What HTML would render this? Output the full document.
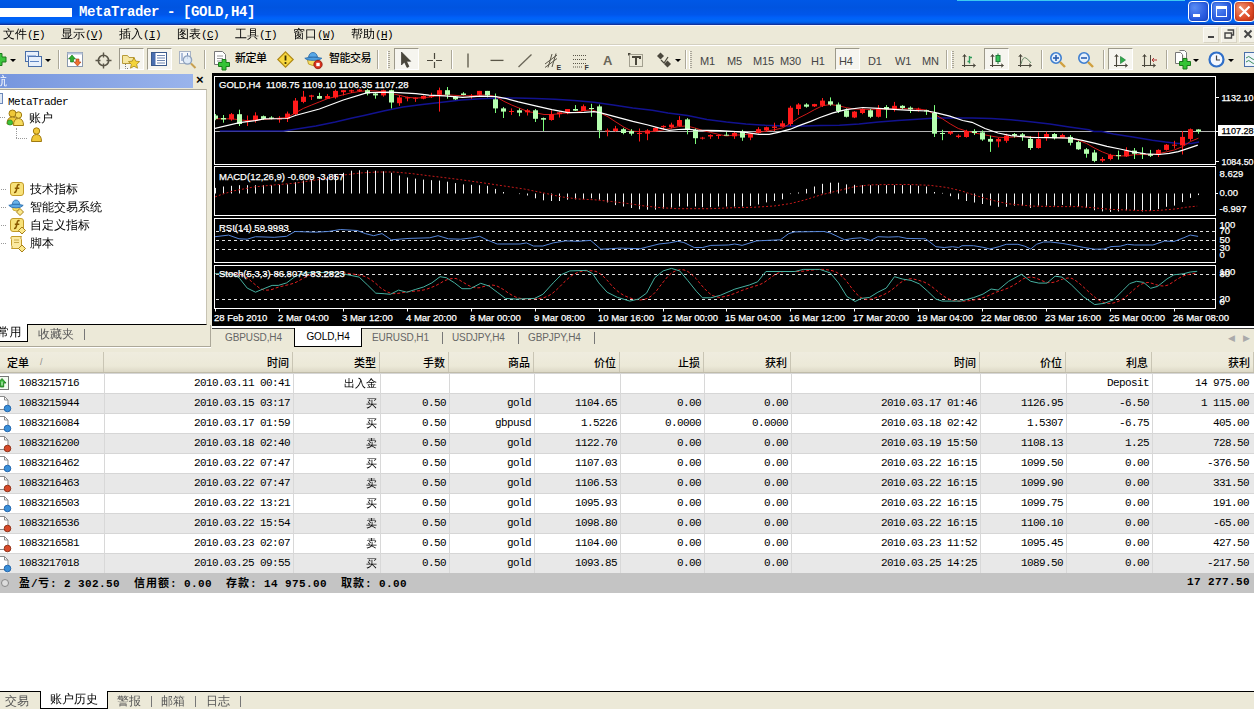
<!DOCTYPE html>
<html lang="zh"><head><meta charset="utf-8"><title>MetaTrader - [GOLD,H4]</title>
<style>
html,body{margin:0;padding:0;background:#fff;}
body{width:1254px;height:709px;overflow:hidden;}
#app{position:relative;width:1254px;height:709px;overflow:hidden;background:#ece9d8;font-family:"Liberation Sans","WenQuanYi Zen Hei",sans-serif;font-size:12px;color:#000;}
.ic{position:absolute;overflow:visible}
.titlebar{position:absolute;left:0;top:0;width:1254px;height:25px;background:linear-gradient(#0058e6 0%,#0054e0 30%,#0056ea 58%,#0060f8 70%,#0068f6 84%,#0058e0 92%,#1038a8 97%,#0c2c8c 100%);}
.titlebar .redact{position:absolute;left:0;top:8px;width:72px;height:9px;background:#fff}
.titlebar .ttext{position:absolute;left:79px;top:3px;font:bold 14px/18px "Liberation Mono",monospace;letter-spacing:-0.4px;color:#fff;white-space:pre}
.titlebar .cyan{position:absolute;left:957px;top:0;width:228px;height:1px;background:#3cc8f0}
.wb{position:absolute;top:1px;width:19px;height:19px;border:1px solid #fff;border-radius:4px;background:radial-gradient(circle at 30% 30%,#5a8cf4,#2a5ce0 60%,#1a48c8);box-shadow:inset 0 0 2px #1038a8}
.wb.close{background:radial-gradient(circle at 30% 30%,#f0906c,#dc4a26 60%,#c03010);box-shadow:inset 0 0 2px #902008}
.menubar{position:absolute;left:0;top:25px;width:1254px;height:20px;background:#ece9d8;border-top:1px solid #f8f8ff;border-bottom:1px solid #d4d0c0;box-sizing:border-box}
.menubar span{position:absolute;top:1px;font:12px/15px "WenQuanYi Zen Hei",sans-serif;white-space:pre}
.menubar span i{font:normal 11px/15px "Liberation Mono",monospace;letter-spacing:-0.6px}
.menubar{--x:0}
.toolbar{position:absolute;left:0;top:45px;width:1254px;height:28px;background:#ece9d8;border-top:1px solid #fff;box-sizing:border-box}
.toolbar .ic{margin-top:-1px}
.ddarr{position:absolute;width:0;height:0;border-left:3px solid transparent;border-right:3px solid transparent;border-top:3px solid #000;margin-top:-46px}
.tsep{position:absolute;top:4px;width:1px;height:19px;background:#aca899;box-shadow:1px 0 0 #fff}
.grip{position:absolute;top:5px;width:3px;height:18px;background:repeating-linear-gradient(#aaa69a 0 1px,transparent 1px 2px);box-shadow:1px 0 0 #fff inset}
.pressed{position:absolute;top:2px;height:22px;background:#f6f5ef;border:1px solid;border-color:#9c998a #fff #fff #9c998a;box-sizing:border-box}
.tlabel{position:absolute;top:6px;font:500 11px/13px "Liberation Sans","Noto Sans CJK SC",sans-serif;letter-spacing:-0.5px;white-space:pre}
.tA{position:absolute;top:8px;font:bold 13px/14px "Liberation Sans",sans-serif;color:#6a6658}
.tf{position:absolute;top:9px;font:11px/12px "Liberation Sans",sans-serif;color:#444;letter-spacing:-0.2px}
.nav{position:absolute;left:0;top:73px;width:209px;height:273px;}
.navhead{position:absolute;left:0;top:1px;width:193px;height:14px;background:linear-gradient(90deg,#7696de,#9ab4ec);}
.navtitle{position:absolute;left:-5px;top:0px;font:12px/14px "WenQuanYi Zen Hei",sans-serif;color:#fff}
.navx{position:absolute;left:196px;top:-2px;font:bold 13px/16px "Liberation Sans",sans-serif;color:#000}
.navbody{position:absolute;left:0;top:16px;width:206px;height:234px;background:#fff;border-top:1px solid #aca899;border-right:1px solid #c8c4b4;border-bottom:1px solid #000;overflow:hidden}
.nt{position:absolute;font:12px/14px "Liberation Sans","WenQuanYi Zen Hei",sans-serif;white-space:pre}
.nt.mono{font:11px/14px "Liberation Mono",monospace;letter-spacing:-0.6px}
.dotv{position:absolute;width:0;border-left:1px dotted #999}
.doth{position:absolute;height:0;border-top:1px dotted #999}
.navtabs{position:absolute;left:0;top:252px;width:209px;height:21px}
.ntab{position:absolute;left:-9px;top:-1px;width:35px;height:17px;background:#fff;border:1px solid #000;border-top:none;font:12px/16px "WenQuanYi Zen Hei",sans-serif;text-align:center;box-sizing:content-box}
.ntab2{position:absolute;left:38px;top:1px;font:12px/16px "WenQuanYi Zen Hei",sans-serif;color:#555}
.nsep{position:absolute;left:84px;top:4px;width:1px;height:11px;background:#777}
.chartwrap{position:absolute;left:212px;top:73px;width:1042px;height:253px;background:#000}
.chart{display:block}
.ctabs{position:absolute;left:0;top:326px;width:1254px;height:21px;}
.ctabs:before{content:"";position:absolute;left:212px;top:0;width:1042px;height:2px;background:#fff}
.ctab{position:absolute;top:5px;font:10px/13px "Liberation Sans",sans-serif;color:#666;letter-spacing:-0.1px}
.ctab.act{top:2px;height:18px;background:#fff;border:1px solid #000;border-top:none;color:#000;text-align:center;font-size:10px;line-height:18px}
.csep{position:absolute;top:6px;width:1px;height:12px;background:#777}
.carr{position:absolute;top:6px;font:9px/12px "DejaVu Sans",sans-serif;color:#aaa}
.term{position:absolute;left:0;top:352px;width:1254px;height:339px;background:#fff}
.thead{position:absolute;left:0;top:0;width:1254px;height:21px;background:linear-gradient(#efecdf,#ece9d8 70%,#dcd8c6);border-bottom:1px solid #c0bcaa;box-sizing:border-box}
.th{position:absolute;top:0;height:20px;box-sizing:border-box;border-right:1px solid #c9c5b4;text-align:right;font:500 11px/20px "Noto Sans CJK SC",sans-serif}
.th span{padding-right:3px}
.th.first{text-align:left}
.th.first span{padding-left:7px}
.sortmark{position:absolute;left:40px;top:4px;font:9px/12px "Liberation Sans",sans-serif;color:#888}
.tr{position:absolute;left:0;width:1254px;height:20px;box-shadow:inset 0 1px 0 #d6d6d6}
.td{position:absolute;top:0;height:20px;text-align:right;font:11px/20px "Liberation Mono","WenQuanYi Zen Hei",monospace;letter-spacing:-0.6px;white-space:pre;box-sizing:border-box}
.td span{padding-right:3px}
.td.last span{padding-right:5px}
.td.c0{text-align:left}
.td.c0 span{padding-left:19px}
.td.cn{font:11px/20px "WenQuanYi Zen Hei",sans-serif;letter-spacing:0}
.vline{position:absolute;top:21px;width:1px;height:200px;background:#d8d8d8}
.sumrow{position:absolute;left:0;top:221px;width:1254px;height:20px;background:#c4c4c4;font:bold 11px/19px "Liberation Mono","WenQuanYi Zen Hei",monospace;letter-spacing:0.4px;white-space:pre}
.sumrow .cj{font:bold 11px/19px "Noto Sans CJK SC",sans-serif;letter-spacing:1px}
.sumrow .sl{position:absolute;top:0}
.sumrow .sr{position:absolute;right:4px;top:0}
.sumrow .sico{position:absolute;left:1px;top:6px;width:6px;height:6px;border-radius:50%;border:1px solid #888;background:#ddd}
.btabs{position:absolute;left:0;top:691px;width:1254px;height:18px;background:#ece9d8;border-top:1px solid #000;box-sizing:border-box}
.bt{position:absolute;top:2px;font:12px/14px "WenQuanYi Zen Hei",sans-serif;color:#555;white-space:pre}
.bt.act{top:-1px;height:17px;background:#fff;border:1px solid #000;border-top:none;color:#000;text-align:center;line-height:17px}
.bsep{position:absolute;top:4px;width:1px;height:11px;background:#777}

.mdib{position:absolute;top:1px;width:16px;height:16px;background:#f2f0e6;border:1px solid;border-color:#fbfaf5 #d8d4c4 #d8d4c4 #fbfaf5;box-sizing:border-box}
.cline{position:absolute;left:212px;top:2px;width:1042px;height:1px;background:#3a3a3a}
.navframe{position:absolute;left:0;top:346px;width:211px;height:1px;background:#aca899;box-shadow:0 1px 0 #fff}
.navframe2{position:absolute;left:210px;top:325px;width:1px;height:22px;background:#aca899}

</style></head><body>
<div id="app">
<div class="titlebar">
  <div class="hl"></div>
  <div class="redact"></div>
  <div class="ttext">MetaTrader - [GOLD,H4]</div>
  <div class="cyan"></div>
  <div class="wb" style="left:1188px"><div style="position:absolute;left:4px;top:12px;width:7px;height:3px;background:#fff"></div></div>
<div class="wb" style="left:1211px"><div style="position:absolute;left:4px;top:4px;width:9px;height:7px;border:1px solid #fff;border-top:3px solid #fff"></div></div>
<div class="wb close" style="left:1234px"><svg width="21" height="21" viewBox="0 0 21 21" style="position:absolute;left:-1px;top:-1px"><path d="M5.500,5.500 L15.500,15.500 M15.500,5.500 L5.500,15.500" stroke="#fff" stroke-width="2.200" fill="none"/></svg></div>
</div>
<div class="menubar">
  <span style="left:3px">文件<i>(<u>F</u>)</i></span><span style="left:61px">显示<i>(<u>V</u>)</i></span><span style="left:119px">插入<i>(<u>I</u>)</i></span><span style="left:177px">图表<i>(<u>C</u>)</i></span><span style="left:235px">工具<i>(<u>T</u>)</i></span><span style="left:293px">窗口<i>(<u>W</u>)</i></span><span style="left:351px">帮助<i>(<u>H</u>)</i></span>
  <div class="mdib" style="left:1203px"></div><div class="mdib" style="left:1221px"></div><div class="mdib" style="left:1239px"></div>
<div style="position:absolute;left:1208px;top:10px;width:6px;height:2px;background:#444"></div>
<svg class="ic" style="left:1224px;top:3px" width="11" height="10" viewBox="0 0 11 10" ><path d="M3.500,1 h6 v5 h-2" stroke="#444" stroke-width="1.400" fill="none"/><path d="M1,4 h6.500 v5 h-6.500 z" stroke="#444" stroke-width="1.400" fill="none"/></svg>
<svg class="ic" style="left:1243px;top:3px" width="10" height="10" viewBox="0 0 10 10" ><path d="M1.500,1.500 L8.500,8.500 M8.500,1.500 L1.500,8.500" stroke="#444" stroke-width="1.900" fill="none"/></svg>
</div>
<div class="toolbar">
<svg class="ic" style="left:-8px;top:7px" width="16" height="16" viewBox="0 0 16 16" ><path d="M5,1.500 h5 v3.500 h4 v5 h-4 v3.500 h-5 v-3.500 h-4 v-5 h4 z" fill="#3cc43c" stroke="#1d7a1d"/></svg>
<div class="ddarr" style="left:10px;top:59px"></div>
<svg class="ic" style="left:25px;top:6px" width="18" height="17" viewBox="0 0 18 17" ><rect x="0.5" y="0.5" width="13" height="10" fill="#e8f0fb" stroke="#4a6fa8"/><rect x="3.5" y="5.5" width="13" height="10" fill="#e8f0fb" stroke="#4a6fa8"/><path d="M2,5 h9 M5,10.5 h9" stroke="#5f86c4"/></svg>
<div class="ddarr" style="left:45px;top:59px"></div>
<div class="tsep" style="left:58px"></div>
<svg class="ic" style="left:67px;top:7px" width="17" height="16" viewBox="0 0 17 16" ><rect x="0.5" y="0.5" width="15" height="14" fill="#fff" stroke="#8a98ad"/><rect x="0.5" y="0.5" width="15" height="2" fill="#b9c6dc"/><path d="M5,3 l3.5,4 h-2 v3 h-3 v-3 h-2 z" fill="#2fae2f" stroke="#157015" stroke-width=".6"/><path d="M10.5,14 l3.5,-4 h-2 v-3 h-3 v3 h-2 z" fill="#f07030" stroke="#a03a10" stroke-width=".6"/></svg>
<svg class="ic" style="left:95px;top:7px" width="18" height="18" viewBox="0 0 18 18" ><circle cx="8.5" cy="8.5" r="5.2" fill="none" stroke="#5a5648" stroke-width="1.6"/><path d="M8.5,0.5 v5 M8.5,11.5 v5 M0.5,8.5 h5 M11.5,8.5 h5" stroke="#5a5648" stroke-width="1.4"/></svg>
<div class="pressed" style="left:119px;width:25px"></div>
<svg class="ic" style="left:122px;top:7px" width="19" height="18" viewBox="0 0 19 18" ><path d="M0.5,3.5 h5 l1.5,2 h5 v6 h-11.5 z" fill="#f6e7a0" stroke="#b79a3a"/><path d="M3.5,12 v4.5 h3" stroke="#777" stroke-dasharray="1,1" fill="none"/><path d="M12,5.5 l1.7,3.6 3.9,.5 -2.9,2.7 .8,3.9 -3.5,-2 -3.5,2 .8,-3.9 -2.9,-2.7 3.9,-.5 z" fill="#f4d43a" stroke="#a8861a" stroke-width=".8"/></svg>
<div class="pressed" style="left:147px;width:25px"></div>
<svg class="ic" style="left:151px;top:7px" width="17" height="16" viewBox="0 0 17 16" ><rect x="0.5" y="0.5" width="15" height="13" fill="#fff" stroke="#3b5a8c"/><rect x="1" y="1" width="3.5" height="12" fill="#4a6fb0"/><path d="M6,3.5 h8 M6,6 h8 M6,8.5 h8 M6,11 h8" stroke="#6f86b0"/></svg>
<svg class="ic" style="left:179px;top:6px" width="19" height="19" viewBox="0 0 19 19" ><rect x="0.5" y="0.5" width="11" height="12" fill="#f4f7fb" stroke="#a8b3c4"/><path d="M3,2 v8 M8.5,2 v6" stroke="#6a86b8"/><circle cx="8.5" cy="9" r="4.2" fill="#dbe7f6" fill-opacity=".8" stroke="#8fa2bd" stroke-width="1.2"/><path d="M12,12.5 l4.5,4.5" stroke="#c8a050" stroke-width="2"/></svg>
<div class="tsep" style="left:204px"></div>
<svg class="ic" style="left:213px;top:6px" width="19" height="20" viewBox="0 0 19 20" ><path d="M1.5,0.5 h8 l3,3 v10 h-11 z" fill="#fff" stroke="#777"/><path d="M4,5 h6 M4,7.5 h6 M4,10 h4" stroke="#999"/><path d="M9,8.5 h4 v3 h3.5 v4 h-3.5 v3.5 h-4 v-3.5 h-3.5 v-4 h3.5 z" fill="#35c435" stroke="#1a7a1a"/></svg>
<div class="tlabel" style="left:235px">新定单</div>
<svg class="ic" style="left:277px;top:6px" width="18" height="18" viewBox="0 0 18 18" ><path d="M8.5,0.8 L16.2,8.5 L8.5,16.2 L0.8,8.5 z" fill="#f8d840" stroke="#b08a18" stroke-width="1.2"/><path d="M8.5,4.5 v5" stroke="#3a3000" stroke-width="1.8"/><circle cx="8.5" cy="12" r="1.1" fill="#3a3000"/></svg>
<svg class="ic" style="left:304px;top:6px" width="20" height="19" viewBox="0 0 20 19" ><path d="M3,7 h12 l-1.5,6 q-4.5,3 -9,0 z" fill="#f6dc60" stroke="#c0a030"/><path d="M0.8,7.2 q8.5,-2.5 17,0 q-2,2.2 -8.500,2.2 t-8.500,-2.200 z" fill="#4f9fe0" stroke="#2a6aa8" stroke-width=".8"/><path d="M4.5,6 q1,-4.500 4.500,-4.500 t4.500,4.500 z" fill="#58a8e8" stroke="#2a6aa8" stroke-width=".8"/><circle cx="14" cy="13.500" r="4.200" fill="#d8301c" stroke="#8a1a0c" stroke-width=".8"/><rect x="12.300" y="11.800" width="3.400" height="3.400" fill="#fff"/></svg>
<div class="tlabel" style="left:329px">智能交易</div>
<div class="tsep" style="left:377px"></div>
<div class="grip" style="left:387px"></div>
<div class="pressed" style="left:394px;width:25px"></div>
<svg class="ic" style="left:400px;top:6px" width="12" height="18" viewBox="0 0 12 18" ><path d="M1.500,1 v13 l3,-3 l2.500,5.500 l2,-1 l-2.500,-5.200 h4.200 z" fill="#4a473c" stroke="#2e2c25" stroke-width=".6"/></svg>
<svg class="ic" style="left:426px;top:7px" width="18" height="18" viewBox="0 0 18 18" ><path d="M8.500,1 v6 M8.500,10 v6 M1,8.500 h6 M10,8.500 h6" stroke="#4a473c" stroke-width="1.200"/></svg>
<div class="tsep" style="left:451px"></div>
<svg class="ic" style="left:464px;top:7px" width="8" height="18" viewBox="0 0 8 18" ><path d="M4,1.500 v14" stroke="#5a5648" stroke-width="1.300"/></svg>
<svg class="ic" style="left:489px;top:11px" width="16" height="8" viewBox="0 0 16 8" ><path d="M1.500,4.400 h13" stroke="#5a5648" stroke-width="1.300"/></svg>
<svg class="ic" style="left:516px;top:7px" width="18" height="18" viewBox="0 0 18 18" ><path d="M2.500,15 L15.500,2.500" stroke="#6a6658" stroke-width="1.300"/></svg>
<svg class="ic" style="left:544px;top:7px" width="19" height="19" viewBox="0 0 19 19" ><path d="M1,12 L13,3 M1,15.500 L13,6.500 M4,15.500 L8,2 M8,15 L12,1.500" stroke="#5a5648" stroke-width="1"/><text x="12.500" y="18" font-size="7" font-weight="bold" font-family="Liberation Sans, sans-serif" fill="#333">E</text></svg>
<svg class="ic" style="left:572px;top:7px" width="19" height="19" viewBox="0 0 19 19" ><path d="M1,3.500 h13 M1,7.500 h13 M1,11.500 h13 M1,15 h9" stroke="#5a5648" stroke-dasharray="1,1"/><text x="12.500" y="18" font-size="7" font-weight="bold" font-family="Liberation Sans, sans-serif" fill="#333">F</text></svg>
<div class="tA" style="left:603px">A</div>
<svg class="ic" style="left:627px;top:6px" width="18" height="18" viewBox="0 0 18 18" ><rect x="2.500" y="3.500" width="13" height="12" fill="none" stroke="#5a5648" stroke-dasharray="1,1"/><path d="M5,6 h8 v2 M9,6 v8" stroke="#4a473c" stroke-width="2" fill="none"/><path d="M1,2 l3,0 l-3,3 z" fill="#4a473c"/></svg>
<svg class="ic" style="left:656px;top:7px" width="17" height="17" viewBox="0 0 17 17" ><path d="M1,4 l3.500,-3.500 l3.500,3.500 l-3.500,3.500 z" fill="#4a473c"/><path d="M8,12 l3.500,-3.500 l3.500,3.500 l-3.500,3.500 z" fill="#4a473c"/><path d="M5,8 l3,3 l4,-6" stroke="#4a473c" fill="none" stroke-width="1.200"/></svg>
<div class="ddarr" style="left:675px;top:59px"></div>
<div class="tsep" style="left:685px"></div>
<div class="grip" style="left:689px"></div>
<div class="tf" style="left:700px">M1</div>
<div class="tf" style="left:727px">M5</div>
<div class="tf" style="left:753px">M15</div>
<div class="tf" style="left:780px">M30</div>
<div class="tf" style="left:811px">H1</div>
<div class="pressed" style="left:835px;width:25px"></div>
<div class="tf" style="left:839px">H4</div>
<div class="tf" style="left:868px">D1</div>
<div class="tf" style="left:895px">W1</div>
<div class="tf" style="left:922px">MN</div>
<div class="tsep" style="left:946px"></div>
<div class="grip" style="left:951px"></div>
<svg class="ic" style="left:961px;top:7px" width="17" height="17" viewBox="0 0 17 17" ><path d="M3.500,3 v12 M1,13.500 h13" stroke="#4a473c" stroke-width="1.100" fill="none"/><path d="M1.800,5 l1.700,-2.500 l1.700,2.500 M12,11.800 l2.500,1.700 l-2.500,1.700" stroke="#4a473c" stroke-width="1" fill="none"/><path d="M8.500,4 v7.500 M6.500,9.500 h2 M8.500,5.500 h2.500" stroke="#2f9a5a" stroke-width="1.400" fill="none"/></svg>
<div class="pressed" style="left:984px;width:25px"></div>
<svg class="ic" style="left:989px;top:7px" width="17" height="17" viewBox="0 0 17 17" ><path d="M3.500,3 v12 M1,13.500 h13" stroke="#4a473c" stroke-width="1.100" fill="none"/><path d="M1.800,5 l1.700,-2.500 l1.700,2.500 M12,11.800 l2.500,1.700 l-2.500,1.700" stroke="#4a473c" stroke-width="1" fill="none"/><path d="M9,1.500 v10.500" stroke="#1d7a3a"/><rect x="7" y="3.500" width="4" height="6" fill="#35c45a" stroke="#1d7a3a"/></svg>
<svg class="ic" style="left:1017px;top:7px" width="17" height="17" viewBox="0 0 17 17" ><path d="M3.500,3 v12 M1,13.500 h13" stroke="#4a473c" stroke-width="1.100" fill="none"/><path d="M1.800,5 l1.700,-2.500 l1.700,2.500 M12,11.800 l2.500,1.700 l-2.500,1.700" stroke="#4a473c" stroke-width="1" fill="none"/><path d="M4,12 q2,-8 5,-6 t5,5" stroke="#6a8a6a" fill="none"/></svg>
<div class="tsep" style="left:1041px"></div>
<svg class="ic" style="left:1049px;top:6px" width="18" height="18" viewBox="0 0 18 18" ><circle cx="7" cy="7" r="5.200" fill="#e6f0fc" stroke="#3f7fd0" stroke-width="1.600"/><path d="M4,7 h6" stroke="#2a5fb0" stroke-width="1.600"/><path d="M7,4 v6" stroke="#2a5fb0" stroke-width="1.600"/><path d="M11,11 l5,5" stroke="#d0a040" stroke-width="2.400"/></svg>
<svg class="ic" style="left:1077px;top:6px" width="18" height="18" viewBox="0 0 18 18" ><circle cx="7" cy="7" r="5.200" fill="#e6f0fc" stroke="#3f7fd0" stroke-width="1.600"/><path d="M4,7 h6" stroke="#2a5fb0" stroke-width="1.600"/><path d="M11,11 l5,5" stroke="#d0a040" stroke-width="2.400"/></svg>
<div class="tsep" style="left:1103px"></div>
<div class="pressed" style="left:1108px;width:25px"></div>
<svg class="ic" style="left:1113px;top:7px" width="17" height="17" viewBox="0 0 17 17" ><path d="M3.500,3 v12 M1,13.500 h13" stroke="#4a473c" stroke-width="1.100" fill="none"/><path d="M1.800,5 l1.700,-2.500 l1.700,2.500 M12,11.800 l2.500,1.700 l-2.500,1.700" stroke="#4a473c" stroke-width="1" fill="none"/><path d="M7.500,4.500 l5,3.500 l-5,3.500 z" fill="#2fae4a" stroke="#157030" stroke-width=".6"/></svg>
<svg class="ic" style="left:1141px;top:7px" width="18" height="17" viewBox="0 0 18 17" ><path d="M3.500,3 v12 M1,13.500 h13" stroke="#4a473c" stroke-width="1.100" fill="none"/><path d="M1.800,5 l1.700,-2.500 l1.700,2.500 M12,11.800 l2.500,1.700 l-2.500,1.700" stroke="#4a473c" stroke-width="1" fill="none"/><path d="M9.500,3 v10.500" stroke="#4a473c"/><path d="M16,8 h-5 m2,-2 l-2,2 l2,2" stroke="#b03030" fill="none"/></svg>
<div class="tsep" style="left:1166px"></div>
<svg class="ic" style="left:1174px;top:5px" width="20" height="20" viewBox="0 0 20 20" ><path d="M1.500,2.500 h5 l2,2 v9 h-7 z" fill="#fff" stroke="#777"/><path d="M5.500,0.500 h5 l2,2 v6" fill="#fff" stroke="#777"/><path d="M9,8.500 h4 v3 h3.500 v4 h-3.500 v3.500 h-4 v-3.500 h-3.500 v-4 h3.500 z" fill="#35c435" stroke="#1a7a1a"/></svg>
<div class="ddarr" style="left:1193px;top:59px"></div>
<svg class="ic" style="left:1208px;top:6px" width="18" height="18" viewBox="0 0 18 18" ><circle cx="8.500" cy="8.500" r="7" fill="#f4f8ff" stroke="#2f6fc8" stroke-width="2.200"/><path d="M8.500,4.500 v4.500 h3.500" stroke="#444" fill="none" stroke-width="1.200"/></svg>
<div class="ddarr" style="left:1228px;top:59px"></div>
<svg class="ic" style="left:1244px;top:7px" width="12" height="17" viewBox="0 0 12 17" ><rect x="0.500" y="0.500" width="14" height="14" fill="#eef4fb" stroke="#4a6fa8"/><path d="M2,6 q3,-3 5,0 t5,0 M2,10 q3,-3 5,0 t5,0" stroke="#3a8a5a" fill="none"/></svg>
</div>
<div class="nav">
  <div class="navhead"><span class="navtitle">航</span><span class="navx">×</span></div>
  <div class="navbody">
    <svg class="ic" style="left:-8px;top:3px" width="12" height="12" viewBox="0 0 12 12" ><rect x="0.500" y="0.500" width="10" height="10" fill="#dfe8f5" stroke="#6a86b8"/></svg>
<div class="nt mono" style="left:8px;top:5px">MetaTrader</div>
<svg class="ic" style="left:6px;top:19px" width="20" height="18" viewBox="0 0 20 18" ><circle cx="6.500" cy="4.500" r="3.500" fill="#f0c838" stroke="#a07a10"/><path d="M1,15 q0,-7 5.500,-7 t5.500,7 z" fill="#f0c838" stroke="#a07a10"/><circle cx="12.500" cy="6" r="3.200" fill="#f6dc60" stroke="#a07a10"/><path d="M7.500,16.500 q0,-7 5,-7 t5,7 z" fill="#f6dc60" stroke="#a07a10"/><circle cx="4" cy="13.500" r="2.600" fill="#3cc43c" stroke="#1d7a1d" stroke-width=".6"/></svg>
<div class="nt" style="left:29px;top:21px">账户</div>
<div class="dotv" style="left:16px;top:38px;height:10px"></div><div class="doth" style="left:16px;top:48px;width:11px"></div>
<svg class="ic" style="left:30px;top:37px" width="14" height="16" viewBox="0 0 14 16" ><circle cx="6.500" cy="4" r="3.200" fill="#f0c838" stroke="#a07a10"/><path d="M1.500,14.500 q0,-7 5,-7 t5,7 z" fill="#f0c838" stroke="#a07a10"/></svg>
<svg class="ic" style="left:10px;top:92px" width="16" height="16" viewBox="0 0 16 16" ><rect x="0.500" y="0.500" width="13" height="13" rx="2.500" fill="#f8e27a" stroke="#c29a28"/><path d="M4,10.500 q1.800,0.300 2.300,-2 l1,-4.500 q.5,-1.800 2.300,-1.300 M4.800,6.300 h4.500" stroke="#8a5a00" stroke-width="1.500" fill="none"/></svg>
<div class="nt" style="left:30px;top:92px">技术指标</div>
<svg class="ic" style="left:8px;top:109px" width="20" height="19" viewBox="0 0 20 19" ><path d="M4.500,7 h7 l-.5,4 q-3,2 -6,0 z" fill="#f6dc60" stroke="#c0a030" stroke-width=".8"/><path d="M0.800,6.300 q7.200,-2.600 14.400,0 q-1.600,2.600 -7.200,2.600 t-7.200,-2.600 z" fill="#5aa8e4" stroke="#2a6aa8" stroke-width=".8"/><path d="M4.200,5.200 q.8,-4.200 3.800,-4.200 t3.800,4.200 z" fill="#6ab4ea" stroke="#2a6aa8" stroke-width=".8"/><path d="M8.5,13 l3.500,-3.500 l3.500,3.500 l-3.500,3.500 z" fill="#fbe88a" stroke="#a8801a" stroke-width="1"/></svg>
<div class="nt" style="left:30px;top:110px">智能交易系统</div>
<svg class="ic" style="left:10px;top:128px" width="18" height="18" viewBox="0 0 18 18" ><rect x="0.500" y="0.500" width="13" height="13" rx="2.500" fill="#f8e27a" stroke="#c29a28"/><path d="M4,10.500 q1.800,0.300 2.300,-2 l1,-4.500 q.5,-1.800 2.300,-1.300 M4.800,6.300 h4.500" stroke="#8a5a00" stroke-width="1.500" fill="none"/><path d="M8.5,12.5 l3.500,-3.500 l3.500,3.500 l-3.500,3.500 z" fill="#fbe88a" stroke="#a8801a" stroke-width="1"/></svg>
<div class="nt" style="left:30px;top:128px">自定义指标</div>
<svg class="ic" style="left:10px;top:145px" width="18" height="19" viewBox="0 0 18 19" ><path d="M1.500,1.500 h10 q-1.500,1.500 0,3 v6 q1.500,1.500 0,3 h-10 q1.500,-1.500 0,-3 v-6 q-1.500,-1.500 0,-3 z" fill="#fbe9a0" stroke="#c29a28"/><path d="M4,5 h5 M4,7.500 h5" stroke="#c8a848"/><path d="M8.5,13.5 l3.500,-3.500 l3.500,3.500 l-3.500,3.500 z" fill="#fbe88a" stroke="#a8801a" stroke-width="1"/></svg>
<div class="nt" style="left:30px;top:146px">脚本</div>
<div class="doth" style="left:1px;top:99px;width:5px"></div>
<div class="doth" style="left:1px;top:117px;width:5px"></div>
<div class="doth" style="left:1px;top:135px;width:5px"></div>
<div class="doth" style="left:1px;top:153px;width:5px"></div>
<div class="doth" style="left:0px;top:27px;width:5px"></div>
  </div>
  <div class="navtabs"><div class="ntab act">常用</div><div class="ntab2">收藏夹</div><div class="nsep"></div></div>
</div>
<div class="navframe"></div><div class="navframe2"></div>
<div class="chartwrap">
<svg class="chart" width="1042" height="253" viewBox="212 73 1042 253" font-family="'Liberation Sans', sans-serif" font-size="9.5">
<rect x="212" y="73" width="1042" height="253" fill="#000"/>
<clipPath id="cm"><rect x="215" y="77" width="1000" height="87"/></clipPath>
<g clip-path="url(#cm)">
<line x1="215" y1="131.5" x2="1215" y2="131.5" stroke="#b4b4b4" stroke-width="1"/>
<path d="M219.8,131.1 L283.4,131.1 L295.1,129.2 L315.8,125.9 L335.3,122.0 L352.2,118.1 L364.0,115.5 L383.5,111.0 L402.9,107.1 L422.4,104.5 L441.9,102.3 L461.3,100.0 L480.8,98.7 L500.3,98.0 L516.0,98.0 L535.5,98.4 L554.9,99.3 L574.4,100.6 L593.9,102.3 L613.3,105.1 L632.8,108.0 L652.3,110.3 L668.0,112.9 L687.5,115.5 L706.9,119.4 L726.4,122.0 L745.9,124.0 L765.3,125.3 L784.8,125.9 L804.3,125.9 L820.0,125.6 L839.5,125.3 L858.9,124.0 L878.4,122.0 L897.9,120.5 L917.3,119.2 L936.8,118.1 L956.3,117.9 L972.0,118.1 L991.5,118.4 L1010.9,119.7 L1030.4,121.8 L1049.9,124.0 L1069.3,126.9 L1088.8,129.8 L1094.0,131.4 L1101.8,131.4 L1113.5,134.0 L1132.9,136.9 L1152.4,140.2 L1165.4,142.1 L1178.3,143.4 L1191.3,143.4 L1199.1,142.1" fill="none" stroke="#121290" stroke-width="1.5"/>
<path d="M215.9,118.8 L231.5,118.8 L247.3,120.7 L263.9,119.4 L287.3,117.5 L295.3,112.9 L303.4,108.4 L311.4,105.1 L319.4,101.9 L327.5,98.7 L335.3,96.7 L343.3,94.8 L351.2,92.8 L359.3,91.5 L367.3,90.6 L375.9,90.9 L384.0,92.2 L392.0,93.5 L399.9,95.4 L408.0,97.4 L415.9,98.0 L424.0,97.7 L432.0,96.7 L439.9,95.4 L448.0,94.8 L456.0,95.4 L463.9,95.8 L472.0,95.8 L480.0,95.2 L487.9,94.8 L496.0,96.7 L503.9,101.3 L511.9,105.1 L520.0,108.4 L527.9,111.6 L536.0,112.9 L544.0,114.5 L551.9,114.5 L560.0,113.6 L567.9,112.9 L576.0,112.3 L584.0,110.7 L591.9,109.7 L600.0,112.9 L608.0,116.8 L615.9,122.0 L624.0,127.2 L632.0,131.1 L639.9,131.7 L648.0,131.7 L655.9,131.1 L663.9,129.8 L672.0,127.9 L678.6,126.6 L686.6,125.9 L694.6,127.9 L702.4,130.4 L710.4,132.4 L718.4,134.3 L726.4,136.0 L734.4,135.0 L742.4,135.0 L750.4,133.7 L758.4,132.4 L766.4,131.1 L774.4,129.8 L782.5,127.9 L790.4,123.3 L798.4,118.1 L806.3,114.2 L814.4,109.7 L822.4,105.8 L830.4,104.5 L838.6,105.8 L846.6,107.7 L854.4,109.0 L862.4,109.3 L870.4,109.3 L878.4,109.0 L886.4,109.3 L894.4,109.0 L902.4,108.8 L910.4,108.8 L918.4,109.0 L926.4,110.1 L934.5,114.2 L942.4,118.8 L950.4,124.0 L958.3,128.5 L966.4,131.1 L974.4,133.0 L982.4,134.3 L990.6,136.0 L998.6,137.3 L1006.4,137.6 L1014.4,136.9 L1022.4,136.5 L1030.4,136.9 L1038.4,137.6 L1046.4,137.6 L1054.4,137.6 L1062.4,137.6 L1070.4,138.2 L1078.4,140.2 L1086.5,143.4 L1094.4,148.0 L1102.4,151.9 L1110.5,155.1 L1118.7,156.0 L1126.4,155.8 L1134.5,154.7 L1142.4,154.5 L1150.4,154.7 L1158.4,153.8 L1166.4,151.9 L1174.5,149.9 L1182.4,146.7 L1190.4,141.5 L1198.5,138.2" fill="none" stroke="#d01818" stroke-width="1"/>
<line x1="215.5" y1="114.0" x2="215.5" y2="120.2" stroke="#7dff7d" stroke-width="1"/>
<rect x="213.0" y="115.5" width="5" height="3.3" fill="#b6ffb0"/>
<line x1="223.5" y1="115.0" x2="223.5" y2="122.7" stroke="#7dff7d" stroke-width="1"/>
<rect x="221.0" y="118.0" width="5" height="1.5" fill="#b6ffb0"/>
<line x1="231.5" y1="113.0" x2="231.5" y2="120.7" stroke="#ff1a1a" stroke-width="1"/>
<rect x="229.0" y="114.2" width="5" height="5.2" fill="#ff1a1a"/>
<line x1="239.5" y1="109.7" x2="239.5" y2="126.0" stroke="#7dff7d" stroke-width="1"/>
<rect x="237.0" y="114.2" width="5" height="9.8" fill="#b6ffb0"/>
<line x1="247.5" y1="115.5" x2="247.5" y2="126.0" stroke="#ff1a1a" stroke-width="1"/>
<rect x="245.0" y="120.7" width="5" height="1.0" fill="#ff1a1a"/>
<line x1="255.5" y1="112.3" x2="255.5" y2="122.7" stroke="#ff1a1a" stroke-width="1"/>
<rect x="253.0" y="115.5" width="5" height="5.2" fill="#ff1a1a"/>
<line x1="263.5" y1="115.5" x2="263.5" y2="120.0" stroke="#7dff7d" stroke-width="1"/>
<rect x="261.0" y="116.2" width="5" height="2.6" fill="#b6ffb0"/>
<line x1="271.5" y1="116.2" x2="271.5" y2="119.4" stroke="#7dff7d" stroke-width="1"/>
<rect x="269.0" y="117.5" width="5" height="1.3" fill="#b6ffb0"/>
<line x1="279.5" y1="116.2" x2="279.5" y2="122.7" stroke="#ff1a1a" stroke-width="1"/>
<rect x="277.0" y="118.5" width="5" height="1.0" fill="#ff1a1a"/>
<line x1="287.5" y1="111.6" x2="287.5" y2="122.0" stroke="#ff1a1a" stroke-width="1"/>
<rect x="285.0" y="113.6" width="5" height="5.2" fill="#ff1a1a"/>
<line x1="295.5" y1="98.0" x2="295.5" y2="115.0" stroke="#ff1a1a" stroke-width="1"/>
<rect x="293.0" y="100.6" width="5" height="13.6" fill="#ff1a1a"/>
<line x1="303.5" y1="90.9" x2="303.5" y2="103.2" stroke="#ff1a1a" stroke-width="1"/>
<rect x="301.0" y="96.7" width="5" height="5.2" fill="#ff1a1a"/>
<line x1="311.5" y1="94.8" x2="311.5" y2="100.0" stroke="#ff1a1a" stroke-width="1"/>
<rect x="309.0" y="95.4" width="5" height="1.3" fill="#ff1a1a"/>
<line x1="319.5" y1="92.8" x2="319.5" y2="98.7" stroke="#7dff7d" stroke-width="1"/>
<rect x="317.0" y="96.0" width="5" height="2.7" fill="#b6ffb0"/>
<line x1="327.5" y1="94.1" x2="327.5" y2="98.7" stroke="#ff1a1a" stroke-width="1"/>
<rect x="325.0" y="96.0" width="5" height="2.7" fill="#ff1a1a"/>
<line x1="335.5" y1="89.6" x2="335.5" y2="98.7" stroke="#ff1a1a" stroke-width="1"/>
<rect x="333.0" y="90.9" width="5" height="6.5" fill="#ff1a1a"/>
<line x1="343.5" y1="90.2" x2="343.5" y2="95.4" stroke="#ff1a1a" stroke-width="1"/>
<rect x="341.0" y="90.2" width="5" height="2.0" fill="#ff1a1a"/>
<line x1="351.5" y1="89.6" x2="351.5" y2="93.0" stroke="#ff1a1a" stroke-width="1"/>
<rect x="349.0" y="90.2" width="5" height="1.3" fill="#ff1a1a"/>
<line x1="359.5" y1="89.0" x2="359.5" y2="92.0" stroke="#ff1a1a" stroke-width="1"/>
<rect x="357.0" y="89.6" width="5" height="1.3" fill="#ff1a1a"/>
<line x1="367.5" y1="89.0" x2="367.5" y2="95.4" stroke="#7dff7d" stroke-width="1"/>
<rect x="365.0" y="90.2" width="5" height="3.3" fill="#b6ffb0"/>
<line x1="375.5" y1="92.8" x2="375.5" y2="98.7" stroke="#7dff7d" stroke-width="1"/>
<rect x="373.0" y="93.5" width="5" height="1.9" fill="#b6ffb0"/>
<line x1="383.5" y1="89.6" x2="383.5" y2="96.7" stroke="#ff1a1a" stroke-width="1"/>
<rect x="381.0" y="90.2" width="5" height="5.2" fill="#ff1a1a"/>
<line x1="391.5" y1="89.6" x2="391.5" y2="108.4" stroke="#7dff7d" stroke-width="1"/>
<rect x="389.0" y="90.2" width="5" height="12.3" fill="#b6ffb0"/>
<line x1="399.5" y1="95.4" x2="399.5" y2="105.8" stroke="#ff1a1a" stroke-width="1"/>
<rect x="397.0" y="97.4" width="5" height="5.8" fill="#ff1a1a"/>
<line x1="407.5" y1="96.7" x2="407.5" y2="101.3" stroke="#ff1a1a" stroke-width="1"/>
<rect x="405.0" y="97.4" width="5" height="1.0" fill="#ff1a1a"/>
<line x1="415.5" y1="97.4" x2="415.5" y2="101.9" stroke="#ff1a1a" stroke-width="1"/>
<rect x="413.0" y="97.7" width="5" height="1.0" fill="#ff1a1a"/>
<line x1="423.5" y1="95.4" x2="423.5" y2="99.3" stroke="#ff1a1a" stroke-width="1"/>
<rect x="421.0" y="96.0" width="5" height="2.7" fill="#ff1a1a"/>
<line x1="431.5" y1="92.8" x2="431.5" y2="98.0" stroke="#ff1a1a" stroke-width="1"/>
<rect x="429.0" y="96.0" width="5" height="1.1" fill="#ff1a1a"/>
<line x1="439.5" y1="87.6" x2="439.5" y2="111.6" stroke="#ff1a1a" stroke-width="1"/>
<rect x="437.0" y="90.2" width="5" height="4.6" fill="#ff1a1a"/>
<line x1="447.5" y1="87.0" x2="447.5" y2="98.7" stroke="#7dff7d" stroke-width="1"/>
<rect x="445.0" y="90.2" width="5" height="4.6" fill="#b6ffb0"/>
<line x1="455.5" y1="96.0" x2="455.5" y2="100.0" stroke="#7dff7d" stroke-width="1"/>
<rect x="453.0" y="96.7" width="5" height="2.6" fill="#b6ffb0"/>
<line x1="463.5" y1="92.2" x2="463.5" y2="95.4" stroke="#7dff7d" stroke-width="1"/>
<rect x="461.0" y="93.5" width="5" height="1.5" fill="#b6ffb0"/>
<line x1="471.5" y1="94.1" x2="471.5" y2="98.7" stroke="#ff1a1a" stroke-width="1"/>
<rect x="469.0" y="95.8" width="5" height="1.0" fill="#ff1a1a"/>
<line x1="479.5" y1="90.9" x2="479.5" y2="96.7" stroke="#ff1a1a" stroke-width="1"/>
<rect x="477.0" y="90.9" width="5" height="3.9" fill="#ff1a1a"/>
<line x1="487.5" y1="90.9" x2="487.5" y2="97.4" stroke="#7dff7d" stroke-width="1"/>
<rect x="485.0" y="90.9" width="5" height="4.5" fill="#b6ffb0"/>
<line x1="495.5" y1="93.5" x2="495.5" y2="113.0" stroke="#7dff7d" stroke-width="1"/>
<rect x="493.0" y="99.3" width="5" height="9.1" fill="#b6ffb0"/>
<line x1="503.5" y1="107.0" x2="503.5" y2="118.0" stroke="#7dff7d" stroke-width="1"/>
<rect x="501.0" y="108.4" width="5" height="3.2" fill="#b6ffb0"/>
<line x1="511.5" y1="108.4" x2="511.5" y2="114.9" stroke="#ff1a1a" stroke-width="1"/>
<rect x="509.0" y="111.0" width="5" height="1.0" fill="#ff1a1a"/>
<line x1="519.5" y1="108.4" x2="519.5" y2="116.2" stroke="#7dff7d" stroke-width="1"/>
<rect x="517.0" y="110.3" width="5" height="2.4" fill="#b6ffb0"/>
<line x1="527.5" y1="109.0" x2="527.5" y2="115.5" stroke="#ff1a1a" stroke-width="1"/>
<rect x="525.0" y="110.3" width="5" height="2.0" fill="#ff1a1a"/>
<line x1="535.5" y1="109.0" x2="535.5" y2="122.0" stroke="#7dff7d" stroke-width="1"/>
<rect x="533.0" y="110.3" width="5" height="8.5" fill="#b6ffb0"/>
<line x1="543.5" y1="117.5" x2="543.5" y2="131.1" stroke="#7dff7d" stroke-width="1"/>
<rect x="541.0" y="118.1" width="5" height="1.6" fill="#b6ffb0"/>
<line x1="551.5" y1="110.3" x2="551.5" y2="120.7" stroke="#ff1a1a" stroke-width="1"/>
<rect x="549.0" y="114.2" width="5" height="5.8" fill="#ff1a1a"/>
<line x1="559.5" y1="111.6" x2="559.5" y2="117.5" stroke="#ff1a1a" stroke-width="1"/>
<rect x="557.0" y="112.3" width="5" height="1.9" fill="#ff1a1a"/>
<line x1="567.5" y1="109.0" x2="567.5" y2="114.2" stroke="#ff1a1a" stroke-width="1"/>
<rect x="565.0" y="109.0" width="5" height="3.3" fill="#ff1a1a"/>
<line x1="575.5" y1="105.1" x2="575.5" y2="111.0" stroke="#7dff7d" stroke-width="1"/>
<rect x="573.0" y="109.0" width="5" height="1.7" fill="#b6ffb0"/>
<line x1="583.5" y1="104.5" x2="583.5" y2="111.0" stroke="#ff1a1a" stroke-width="1"/>
<rect x="581.0" y="106.2" width="5" height="4.8" fill="#ff1a1a"/>
<line x1="591.5" y1="103.8" x2="591.5" y2="116.8" stroke="#7dff7d" stroke-width="1"/>
<rect x="589.0" y="108.0" width="5" height="1.0" fill="#b6ffb0"/>
<line x1="599.5" y1="104.5" x2="599.5" y2="138.2" stroke="#7dff7d" stroke-width="1"/>
<rect x="597.0" y="106.4" width="5" height="24.0" fill="#b6ffb0"/>
<line x1="607.5" y1="128.5" x2="607.5" y2="136.3" stroke="#ff1a1a" stroke-width="1"/>
<rect x="605.0" y="130.4" width="5" height="1.0" fill="#ff1a1a"/>
<line x1="615.5" y1="125.9" x2="615.5" y2="131.7" stroke="#ff1a1a" stroke-width="1"/>
<rect x="613.0" y="128.5" width="5" height="2.6" fill="#ff1a1a"/>
<line x1="623.5" y1="127.9" x2="623.5" y2="134.3" stroke="#7dff7d" stroke-width="1"/>
<rect x="621.0" y="129.2" width="5" height="3.8" fill="#b6ffb0"/>
<line x1="631.5" y1="129.2" x2="631.5" y2="135.6" stroke="#7dff7d" stroke-width="1"/>
<rect x="629.0" y="131.1" width="5" height="2.6" fill="#b6ffb0"/>
<line x1="639.5" y1="128.5" x2="639.5" y2="141.5" stroke="#ff1a1a" stroke-width="1"/>
<rect x="637.0" y="133.0" width="5" height="1.0" fill="#ff1a1a"/>
<line x1="647.5" y1="129.2" x2="647.5" y2="140.2" stroke="#ff1a1a" stroke-width="1"/>
<rect x="645.0" y="130.4" width="5" height="3.3" fill="#ff1a1a"/>
<line x1="655.5" y1="127.2" x2="655.5" y2="131.7" stroke="#ff1a1a" stroke-width="1"/>
<rect x="653.0" y="127.9" width="5" height="3.2" fill="#ff1a1a"/>
<line x1="663.5" y1="125.3" x2="663.5" y2="129.8" stroke="#ff1a1a" stroke-width="1"/>
<rect x="661.0" y="125.9" width="5" height="1.3" fill="#ff1a1a"/>
<line x1="671.5" y1="122.7" x2="671.5" y2="128.5" stroke="#ff1a1a" stroke-width="1"/>
<rect x="669.0" y="124.6" width="5" height="2.6" fill="#ff1a1a"/>
<line x1="679.5" y1="116.2" x2="679.5" y2="126.6" stroke="#ff1a1a" stroke-width="1"/>
<rect x="677.0" y="120.0" width="5" height="5.9" fill="#ff1a1a"/>
<line x1="687.5" y1="118.1" x2="687.5" y2="134.3" stroke="#7dff7d" stroke-width="1"/>
<rect x="685.0" y="119.4" width="5" height="9.8" fill="#b6ffb0"/>
<line x1="695.5" y1="128.5" x2="695.5" y2="144.0" stroke="#7dff7d" stroke-width="1"/>
<rect x="693.0" y="129.8" width="5" height="8.4" fill="#b6ffb0"/>
<line x1="702.5" y1="136.9" x2="702.5" y2="139.5" stroke="#ff1a1a" stroke-width="1"/>
<rect x="700.0" y="137.6" width="5" height="1.0" fill="#ff1a1a"/>
<line x1="710.5" y1="134.3" x2="710.5" y2="138.9" stroke="#ff1a1a" stroke-width="1"/>
<rect x="708.0" y="135.0" width="5" height="1.5" fill="#ff1a1a"/>
<line x1="718.5" y1="134.3" x2="718.5" y2="138.9" stroke="#ff1a1a" stroke-width="1"/>
<rect x="716.0" y="135.0" width="5" height="1.0" fill="#ff1a1a"/>
<line x1="726.5" y1="131.7" x2="726.5" y2="135.6" stroke="#7dff7d" stroke-width="1"/>
<rect x="724.0" y="134.7" width="5" height="1.0" fill="#b6ffb0"/>
<line x1="734.5" y1="131.1" x2="734.5" y2="138.9" stroke="#ff1a1a" stroke-width="1"/>
<rect x="732.0" y="133.0" width="5" height="3.3" fill="#ff1a1a"/>
<line x1="742.5" y1="129.8" x2="742.5" y2="140.8" stroke="#7dff7d" stroke-width="1"/>
<rect x="740.0" y="131.7" width="5" height="5.9" fill="#b6ffb0"/>
<line x1="750.5" y1="133.0" x2="750.5" y2="140.2" stroke="#ff1a1a" stroke-width="1"/>
<rect x="748.0" y="133.7" width="5" height="3.9" fill="#ff1a1a"/>
<line x1="758.5" y1="127.2" x2="758.5" y2="133.7" stroke="#ff1a1a" stroke-width="1"/>
<rect x="756.0" y="129.2" width="5" height="3.8" fill="#ff1a1a"/>
<line x1="766.5" y1="126.6" x2="766.5" y2="131.7" stroke="#ff1a1a" stroke-width="1"/>
<rect x="764.0" y="127.2" width="5" height="3.2" fill="#ff1a1a"/>
<line x1="774.5" y1="122.7" x2="774.5" y2="131.1" stroke="#ff1a1a" stroke-width="1"/>
<rect x="772.0" y="126.6" width="5" height="1.3" fill="#ff1a1a"/>
<line x1="782.5" y1="120.7" x2="782.5" y2="127.2" stroke="#ff1a1a" stroke-width="1"/>
<rect x="780.0" y="123.3" width="5" height="3.3" fill="#ff1a1a"/>
<line x1="790.5" y1="105.8" x2="790.5" y2="125.9" stroke="#ff1a1a" stroke-width="1"/>
<rect x="788.0" y="107.7" width="5" height="16.3" fill="#ff1a1a"/>
<line x1="798.5" y1="103.2" x2="798.5" y2="114.9" stroke="#ff1a1a" stroke-width="1"/>
<rect x="796.0" y="104.5" width="5" height="4.5" fill="#ff1a1a"/>
<line x1="806.5" y1="103.2" x2="806.5" y2="107.7" stroke="#7dff7d" stroke-width="1"/>
<rect x="804.0" y="104.5" width="5" height="2.2" fill="#b6ffb0"/>
<line x1="814.5" y1="103.8" x2="814.5" y2="107.0" stroke="#ff1a1a" stroke-width="1"/>
<rect x="812.0" y="104.1" width="5" height="2.3" fill="#ff1a1a"/>
<line x1="822.5" y1="98.0" x2="822.5" y2="107.0" stroke="#ff1a1a" stroke-width="1"/>
<rect x="820.0" y="100.6" width="5" height="5.2" fill="#ff1a1a"/>
<line x1="830.5" y1="97.4" x2="830.5" y2="105.8" stroke="#7dff7d" stroke-width="1"/>
<rect x="828.0" y="101.3" width="5" height="3.2" fill="#b6ffb0"/>
<line x1="838.5" y1="102.5" x2="838.5" y2="113.0" stroke="#7dff7d" stroke-width="1"/>
<rect x="836.0" y="104.5" width="5" height="6.5" fill="#b6ffb0"/>
<line x1="846.5" y1="108.4" x2="846.5" y2="117.5" stroke="#7dff7d" stroke-width="1"/>
<rect x="844.0" y="110.3" width="5" height="6.5" fill="#b6ffb0"/>
<line x1="854.5" y1="111.0" x2="854.5" y2="118.1" stroke="#ff1a1a" stroke-width="1"/>
<rect x="852.0" y="111.6" width="5" height="5.9" fill="#ff1a1a"/>
<line x1="862.5" y1="108.4" x2="862.5" y2="114.2" stroke="#ff1a1a" stroke-width="1"/>
<rect x="860.0" y="109.0" width="5" height="4.0" fill="#ff1a1a"/>
<line x1="870.5" y1="109.0" x2="870.5" y2="118.1" stroke="#7dff7d" stroke-width="1"/>
<rect x="868.0" y="110.3" width="5" height="6.5" fill="#b6ffb0"/>
<line x1="878.5" y1="105.1" x2="878.5" y2="117.5" stroke="#ff1a1a" stroke-width="1"/>
<rect x="876.0" y="109.0" width="5" height="7.8" fill="#ff1a1a"/>
<line x1="886.5" y1="105.1" x2="886.5" y2="118.1" stroke="#7dff7d" stroke-width="1"/>
<rect x="884.0" y="107.0" width="5" height="2.3" fill="#b6ffb0"/>
<line x1="894.5" y1="101.9" x2="894.5" y2="111.6" stroke="#ff1a1a" stroke-width="1"/>
<rect x="892.0" y="105.8" width="5" height="3.2" fill="#ff1a1a"/>
<line x1="902.5" y1="105.1" x2="902.5" y2="109.0" stroke="#7dff7d" stroke-width="1"/>
<rect x="900.0" y="105.8" width="5" height="2.2" fill="#b6ffb0"/>
<line x1="910.5" y1="106.4" x2="910.5" y2="113.0" stroke="#7dff7d" stroke-width="1"/>
<rect x="908.0" y="107.7" width="5" height="1.6" fill="#b6ffb0"/>
<line x1="918.5" y1="107.7" x2="918.5" y2="111.6" stroke="#ff1a1a" stroke-width="1"/>
<rect x="916.0" y="108.8" width="5" height="1.0" fill="#ff1a1a"/>
<line x1="926.5" y1="109.7" x2="926.5" y2="114.9" stroke="#7dff7d" stroke-width="1"/>
<rect x="924.0" y="110.3" width="5" height="1.1" fill="#b6ffb0"/>
<line x1="934.5" y1="105.1" x2="934.5" y2="137.0" stroke="#7dff7d" stroke-width="1"/>
<rect x="932.0" y="112.9" width="5" height="20.8" fill="#b6ffb0"/>
<line x1="942.5" y1="129.8" x2="942.5" y2="140.2" stroke="#7dff7d" stroke-width="1"/>
<rect x="940.0" y="133.0" width="5" height="1.0" fill="#b6ffb0"/>
<line x1="950.5" y1="131.1" x2="950.5" y2="135.0" stroke="#ff1a1a" stroke-width="1"/>
<rect x="948.0" y="131.7" width="5" height="2.0" fill="#ff1a1a"/>
<line x1="958.5" y1="134.3" x2="958.5" y2="138.2" stroke="#ff1a1a" stroke-width="1"/>
<rect x="956.0" y="135.6" width="5" height="1.4" fill="#ff1a1a"/>
<line x1="966.5" y1="129.8" x2="966.5" y2="137.6" stroke="#ff1a1a" stroke-width="1"/>
<rect x="964.0" y="131.1" width="5" height="5.9" fill="#ff1a1a"/>
<line x1="974.5" y1="129.2" x2="974.5" y2="135.0" stroke="#7dff7d" stroke-width="1"/>
<rect x="972.0" y="131.1" width="5" height="1.9" fill="#b6ffb0"/>
<line x1="982.5" y1="130.4" x2="982.5" y2="140.8" stroke="#7dff7d" stroke-width="1"/>
<rect x="980.0" y="132.4" width="5" height="7.1" fill="#b6ffb0"/>
<line x1="990.5" y1="135.6" x2="990.5" y2="151.9" stroke="#7dff7d" stroke-width="1"/>
<rect x="988.0" y="138.9" width="5" height="2.8" fill="#b6ffb0"/>
<line x1="998.5" y1="137.6" x2="998.5" y2="147.3" stroke="#ff1a1a" stroke-width="1"/>
<rect x="996.0" y="138.9" width="5" height="2.6" fill="#ff1a1a"/>
<line x1="1006.5" y1="133.7" x2="1006.5" y2="142.8" stroke="#ff1a1a" stroke-width="1"/>
<rect x="1004.0" y="135.6" width="5" height="5.2" fill="#ff1a1a"/>
<line x1="1014.5" y1="133.0" x2="1014.5" y2="137.6" stroke="#7dff7d" stroke-width="1"/>
<rect x="1012.0" y="134.0" width="5" height="1.6" fill="#b6ffb0"/>
<line x1="1022.5" y1="133.0" x2="1022.5" y2="140.8" stroke="#7dff7d" stroke-width="1"/>
<rect x="1020.0" y="134.3" width="5" height="2.0" fill="#b6ffb0"/>
<line x1="1030.5" y1="136.3" x2="1030.5" y2="149.9" stroke="#7dff7d" stroke-width="1"/>
<rect x="1028.0" y="138.9" width="5" height="9.1" fill="#b6ffb0"/>
<line x1="1038.5" y1="132.4" x2="1038.5" y2="148.6" stroke="#ff1a1a" stroke-width="1"/>
<rect x="1036.0" y="138.9" width="5" height="9.1" fill="#ff1a1a"/>
<line x1="1046.5" y1="131.7" x2="1046.5" y2="140.8" stroke="#ff1a1a" stroke-width="1"/>
<rect x="1044.0" y="134.0" width="5" height="3.6" fill="#ff1a1a"/>
<line x1="1054.5" y1="133.0" x2="1054.5" y2="139.5" stroke="#7dff7d" stroke-width="1"/>
<rect x="1052.0" y="134.0" width="5" height="4.2" fill="#b6ffb0"/>
<line x1="1062.5" y1="133.7" x2="1062.5" y2="138.2" stroke="#ff1a1a" stroke-width="1"/>
<rect x="1060.0" y="135.0" width="5" height="2.6" fill="#ff1a1a"/>
<line x1="1070.5" y1="135.0" x2="1070.5" y2="145.4" stroke="#7dff7d" stroke-width="1"/>
<rect x="1068.0" y="136.9" width="5" height="5.9" fill="#b6ffb0"/>
<line x1="1078.5" y1="140.8" x2="1078.5" y2="149.9" stroke="#7dff7d" stroke-width="1"/>
<rect x="1076.0" y="142.1" width="5" height="7.2" fill="#b6ffb0"/>
<line x1="1086.5" y1="148.0" x2="1086.5" y2="157.7" stroke="#7dff7d" stroke-width="1"/>
<rect x="1084.0" y="149.3" width="5" height="4.5" fill="#b6ffb0"/>
<line x1="1094.5" y1="149.9" x2="1094.5" y2="162.2" stroke="#7dff7d" stroke-width="1"/>
<rect x="1092.0" y="152.5" width="5" height="8.4" fill="#b6ffb0"/>
<line x1="1102.5" y1="157.0" x2="1102.5" y2="162.2" stroke="#ff1a1a" stroke-width="1"/>
<rect x="1100.0" y="159.0" width="5" height="1.7" fill="#ff1a1a"/>
<line x1="1110.5" y1="153.8" x2="1110.5" y2="160.3" stroke="#ff1a1a" stroke-width="1"/>
<rect x="1108.0" y="155.1" width="5" height="3.9" fill="#ff1a1a"/>
<line x1="1118.5" y1="150.6" x2="1118.5" y2="159.6" stroke="#7dff7d" stroke-width="1"/>
<rect x="1116.0" y="155.1" width="5" height="1.0" fill="#b6ffb0"/>
<line x1="1126.5" y1="147.3" x2="1126.5" y2="157.0" stroke="#ff1a1a" stroke-width="1"/>
<rect x="1124.0" y="150.6" width="5" height="5.8" fill="#ff1a1a"/>
<line x1="1134.5" y1="148.0" x2="1134.5" y2="159.0" stroke="#7dff7d" stroke-width="1"/>
<rect x="1132.0" y="150.6" width="5" height="3.2" fill="#b6ffb0"/>
<line x1="1142.5" y1="147.3" x2="1142.5" y2="159.0" stroke="#7dff7d" stroke-width="1"/>
<rect x="1140.0" y="153.2" width="5" height="1.0" fill="#b6ffb0"/>
<line x1="1150.5" y1="149.9" x2="1150.5" y2="157.0" stroke="#7dff7d" stroke-width="1"/>
<rect x="1148.0" y="154.2" width="5" height="1.6" fill="#b6ffb0"/>
<line x1="1158.5" y1="149.3" x2="1158.5" y2="157.0" stroke="#ff1a1a" stroke-width="1"/>
<rect x="1156.0" y="149.9" width="5" height="4.6" fill="#ff1a1a"/>
<line x1="1166.5" y1="144.0" x2="1166.5" y2="150.6" stroke="#ff1a1a" stroke-width="1"/>
<rect x="1164.0" y="144.7" width="5" height="5.2" fill="#ff1a1a"/>
<line x1="1174.5" y1="140.8" x2="1174.5" y2="148.6" stroke="#ff1a1a" stroke-width="1"/>
<rect x="1172.0" y="144.7" width="5" height="1.0" fill="#ff1a1a"/>
<line x1="1182.5" y1="131.1" x2="1182.5" y2="154.5" stroke="#ff1a1a" stroke-width="1"/>
<rect x="1180.0" y="136.9" width="5" height="8.5" fill="#ff1a1a"/>
<line x1="1190.5" y1="128.5" x2="1190.5" y2="140.8" stroke="#ff1a1a" stroke-width="1"/>
<rect x="1188.0" y="129.2" width="5" height="9.7" fill="#ff1a1a"/>
<line x1="1198.5" y1="129.2" x2="1198.5" y2="133.7" stroke="#7dff7d" stroke-width="1"/>
<rect x="1196.0" y="129.5" width="5" height="1.9" fill="#b6ffb0"/>
<path d="M212.0,129.2 L239.5,122.7 L255.2,120.7 L263.9,118.8 L287.3,118.5 L295.3,115.5 L319.4,109.0 L343.3,100.0 L367.3,92.6 L390.0,92.2 L415.9,93.7 L428.9,95.2 L444.5,95.8 L462.6,97.4 L480.8,96.1 L496.0,96.7 L506.7,98.7 L518.4,101.9 L535.5,105.8 L551.9,109.7 L567.9,112.7 L584.0,112.3 L593.9,111.6 L600.0,112.7 L615.9,116.8 L632.8,121.4 L648.0,125.0 L658.7,127.9 L669.1,130.4 L678.4,129.5 L687.5,129.2 L696.0,130.1 L719.9,130.7 L743.9,132.1 L758.8,134.3 L769.2,134.3 L778.3,132.4 L790.4,129.2 L798.4,125.9 L810.7,121.4 L820.0,117.5 L833.0,112.9 L846.0,109.7 L862.8,107.5 L878.4,108.4 L897.9,109.7 L910.8,110.3 L927.7,111.0 L934.5,112.3 L949.8,116.2 L962.7,120.5 L972.0,122.3 L985.0,128.5 L998.0,133.0 L1010.9,135.6 L1030.4,137.3 L1049.9,137.6 L1070.6,138.2 L1082.3,140.4 L1095.3,143.4 L1107.0,146.4 L1120.0,149.0 L1132.9,151.9 L1145.9,153.8 L1158.9,154.5 L1169.3,153.4 L1178.3,151.6 L1187.4,148.6 L1197.8,145.1" fill="none" stroke="#fff" stroke-width="1.2"/>
</g>
<rect x="214.5" y="76.5" width="1001" height="88" fill="none" stroke="#fff" stroke-width="1"/>
<rect x="214.5" y="166.5" width="1001" height="49" fill="none" stroke="#fff" stroke-width="1"/>
<rect x="214.5" y="218.5" width="1001" height="44" fill="none" stroke="#fff" stroke-width="1"/>
<rect x="214.5" y="265.5" width="1001" height="43" fill="none" stroke="#fff" stroke-width="1"/>
<line x1="215.5" y1="193.5" x2="215.5" y2="187.9" stroke="#f4f4f4" stroke-width="1"/>
<line x1="223.5" y1="193.5" x2="223.5" y2="186.5" stroke="#f4f4f4" stroke-width="1"/>
<line x1="231.5" y1="193.5" x2="231.5" y2="185.8" stroke="#f4f4f4" stroke-width="1"/>
<line x1="239.5" y1="193.5" x2="239.5" y2="185.2" stroke="#f4f4f4" stroke-width="1"/>
<line x1="247.5" y1="193.5" x2="247.5" y2="185.2" stroke="#f4f4f4" stroke-width="1"/>
<line x1="255.5" y1="193.5" x2="255.5" y2="185.2" stroke="#f4f4f4" stroke-width="1"/>
<line x1="263.5" y1="193.5" x2="263.5" y2="185.2" stroke="#f4f4f4" stroke-width="1"/>
<line x1="271.5" y1="193.5" x2="271.5" y2="185.2" stroke="#f4f4f4" stroke-width="1"/>
<line x1="279.5" y1="193.5" x2="279.5" y2="184.8" stroke="#f4f4f4" stroke-width="1"/>
<line x1="287.5" y1="193.5" x2="287.5" y2="184.4" stroke="#f4f4f4" stroke-width="1"/>
<line x1="295.5" y1="193.5" x2="295.5" y2="182.3" stroke="#f4f4f4" stroke-width="1"/>
<line x1="303.5" y1="193.5" x2="303.5" y2="180.6" stroke="#f4f4f4" stroke-width="1"/>
<line x1="311.5" y1="193.5" x2="311.5" y2="179.0" stroke="#f4f4f4" stroke-width="1"/>
<line x1="319.5" y1="193.5" x2="319.5" y2="177.5" stroke="#f4f4f4" stroke-width="1"/>
<line x1="327.5" y1="193.5" x2="327.5" y2="176.5" stroke="#f4f4f4" stroke-width="1"/>
<line x1="335.5" y1="193.5" x2="335.5" y2="174.8" stroke="#f4f4f4" stroke-width="1"/>
<line x1="343.5" y1="193.5" x2="343.5" y2="172.8" stroke="#f4f4f4" stroke-width="1"/>
<line x1="351.5" y1="193.5" x2="351.5" y2="170.7" stroke="#f4f4f4" stroke-width="1"/>
<line x1="359.5" y1="193.5" x2="359.5" y2="170.3" stroke="#f4f4f4" stroke-width="1"/>
<line x1="367.5" y1="193.5" x2="367.5" y2="170.3" stroke="#f4f4f4" stroke-width="1"/>
<line x1="375.5" y1="193.5" x2="375.5" y2="170.7" stroke="#f4f4f4" stroke-width="1"/>
<line x1="383.5" y1="193.5" x2="383.5" y2="171.3" stroke="#f4f4f4" stroke-width="1"/>
<line x1="391.5" y1="193.5" x2="391.5" y2="172.8" stroke="#f4f4f4" stroke-width="1"/>
<line x1="399.5" y1="193.5" x2="399.5" y2="175.5" stroke="#f4f4f4" stroke-width="1"/>
<line x1="407.5" y1="193.5" x2="407.5" y2="177.5" stroke="#f4f4f4" stroke-width="1"/>
<line x1="415.5" y1="193.5" x2="415.5" y2="178.6" stroke="#f4f4f4" stroke-width="1"/>
<line x1="423.5" y1="193.5" x2="423.5" y2="179.6" stroke="#f4f4f4" stroke-width="1"/>
<line x1="431.5" y1="193.5" x2="431.5" y2="180.2" stroke="#f4f4f4" stroke-width="1"/>
<line x1="439.5" y1="193.5" x2="439.5" y2="180.6" stroke="#f4f4f4" stroke-width="1"/>
<line x1="447.5" y1="193.5" x2="447.5" y2="181.7" stroke="#f4f4f4" stroke-width="1"/>
<line x1="455.5" y1="193.5" x2="455.5" y2="183.1" stroke="#f4f4f4" stroke-width="1"/>
<line x1="463.5" y1="193.5" x2="463.5" y2="184.4" stroke="#f4f4f4" stroke-width="1"/>
<line x1="471.5" y1="193.5" x2="471.5" y2="184.8" stroke="#f4f4f4" stroke-width="1"/>
<line x1="479.5" y1="193.5" x2="479.5" y2="185.2" stroke="#f4f4f4" stroke-width="1"/>
<line x1="487.5" y1="193.5" x2="487.5" y2="185.8" stroke="#f4f4f4" stroke-width="1"/>
<line x1="495.5" y1="193.5" x2="495.5" y2="188.9" stroke="#f4f4f4" stroke-width="1"/>
<line x1="503.5" y1="193.5" x2="503.5" y2="192.0" stroke="#f4f4f4" stroke-width="1"/>
<line x1="519.5" y1="193.5" x2="519.5" y2="194.1" stroke="#f4f4f4" stroke-width="1"/>
<line x1="527.5" y1="193.5" x2="527.5" y2="195.5" stroke="#f4f4f4" stroke-width="1"/>
<line x1="535.5" y1="193.5" x2="535.5" y2="198.3" stroke="#f4f4f4" stroke-width="1"/>
<line x1="543.5" y1="193.5" x2="543.5" y2="200.3" stroke="#f4f4f4" stroke-width="1"/>
<line x1="551.5" y1="193.5" x2="551.5" y2="201.0" stroke="#f4f4f4" stroke-width="1"/>
<line x1="559.5" y1="193.5" x2="559.5" y2="201.0" stroke="#f4f4f4" stroke-width="1"/>
<line x1="567.5" y1="193.5" x2="567.5" y2="199.7" stroke="#f4f4f4" stroke-width="1"/>
<line x1="575.5" y1="193.5" x2="575.5" y2="199.3" stroke="#f4f4f4" stroke-width="1"/>
<line x1="583.5" y1="193.5" x2="583.5" y2="198.9" stroke="#f4f4f4" stroke-width="1"/>
<line x1="591.5" y1="193.5" x2="591.5" y2="198.3" stroke="#f4f4f4" stroke-width="1"/>
<line x1="599.5" y1="193.5" x2="599.5" y2="199.7" stroke="#f4f4f4" stroke-width="1"/>
<line x1="607.5" y1="193.5" x2="607.5" y2="202.4" stroke="#f4f4f4" stroke-width="1"/>
<line x1="615.5" y1="193.5" x2="615.5" y2="205.1" stroke="#f4f4f4" stroke-width="1"/>
<line x1="623.5" y1="193.5" x2="623.5" y2="206.5" stroke="#f4f4f4" stroke-width="1"/>
<line x1="631.5" y1="193.5" x2="631.5" y2="208.0" stroke="#f4f4f4" stroke-width="1"/>
<line x1="639.5" y1="193.5" x2="639.5" y2="209.3" stroke="#f4f4f4" stroke-width="1"/>
<line x1="647.5" y1="193.5" x2="647.5" y2="209.7" stroke="#f4f4f4" stroke-width="1"/>
<line x1="655.5" y1="193.5" x2="655.5" y2="209.7" stroke="#f4f4f4" stroke-width="1"/>
<line x1="663.5" y1="193.5" x2="663.5" y2="208.6" stroke="#f4f4f4" stroke-width="1"/>
<line x1="671.5" y1="193.5" x2="671.5" y2="207.6" stroke="#f4f4f4" stroke-width="1"/>
<line x1="679.5" y1="193.5" x2="679.5" y2="206.5" stroke="#f4f4f4" stroke-width="1"/>
<line x1="687.5" y1="193.5" x2="687.5" y2="206.5" stroke="#f4f4f4" stroke-width="1"/>
<line x1="695.5" y1="193.5" x2="695.5" y2="206.5" stroke="#f4f4f4" stroke-width="1"/>
<line x1="702.5" y1="193.5" x2="702.5" y2="207.2" stroke="#f4f4f4" stroke-width="1"/>
<line x1="710.5" y1="193.5" x2="710.5" y2="207.2" stroke="#f4f4f4" stroke-width="1"/>
<line x1="718.5" y1="193.5" x2="718.5" y2="206.5" stroke="#f4f4f4" stroke-width="1"/>
<line x1="726.5" y1="193.5" x2="726.5" y2="206.5" stroke="#f4f4f4" stroke-width="1"/>
<line x1="734.5" y1="193.5" x2="734.5" y2="206.5" stroke="#f4f4f4" stroke-width="1"/>
<line x1="742.5" y1="193.5" x2="742.5" y2="206.5" stroke="#f4f4f4" stroke-width="1"/>
<line x1="750.5" y1="193.5" x2="750.5" y2="205.9" stroke="#f4f4f4" stroke-width="1"/>
<line x1="758.5" y1="193.5" x2="758.5" y2="204.5" stroke="#f4f4f4" stroke-width="1"/>
<line x1="766.5" y1="193.5" x2="766.5" y2="202.4" stroke="#f4f4f4" stroke-width="1"/>
<line x1="774.5" y1="193.5" x2="774.5" y2="201.0" stroke="#f4f4f4" stroke-width="1"/>
<line x1="782.5" y1="193.5" x2="782.5" y2="199.3" stroke="#f4f4f4" stroke-width="1"/>
<line x1="790.5" y1="193.5" x2="790.5" y2="194.1" stroke="#f4f4f4" stroke-width="1"/>
<line x1="798.5" y1="193.5" x2="798.5" y2="192.5" stroke="#f4f4f4" stroke-width="1"/>
<line x1="806.5" y1="193.5" x2="806.5" y2="188.9" stroke="#f4f4f4" stroke-width="1"/>
<line x1="814.5" y1="193.5" x2="814.5" y2="186.5" stroke="#f4f4f4" stroke-width="1"/>
<line x1="822.5" y1="193.5" x2="822.5" y2="183.8" stroke="#f4f4f4" stroke-width="1"/>
<line x1="830.5" y1="193.5" x2="830.5" y2="182.7" stroke="#f4f4f4" stroke-width="1"/>
<line x1="838.5" y1="193.5" x2="838.5" y2="182.7" stroke="#f4f4f4" stroke-width="1"/>
<line x1="846.5" y1="193.5" x2="846.5" y2="184.4" stroke="#f4f4f4" stroke-width="1"/>
<line x1="854.5" y1="193.5" x2="854.5" y2="184.8" stroke="#f4f4f4" stroke-width="1"/>
<line x1="862.5" y1="193.5" x2="862.5" y2="185.2" stroke="#f4f4f4" stroke-width="1"/>
<line x1="870.5" y1="193.5" x2="870.5" y2="185.2" stroke="#f4f4f4" stroke-width="1"/>
<line x1="878.5" y1="193.5" x2="878.5" y2="185.2" stroke="#f4f4f4" stroke-width="1"/>
<line x1="886.5" y1="193.5" x2="886.5" y2="185.2" stroke="#f4f4f4" stroke-width="1"/>
<line x1="894.5" y1="193.5" x2="894.5" y2="185.2" stroke="#f4f4f4" stroke-width="1"/>
<line x1="902.5" y1="193.5" x2="902.5" y2="185.2" stroke="#f4f4f4" stroke-width="1"/>
<line x1="910.5" y1="193.5" x2="910.5" y2="185.2" stroke="#f4f4f4" stroke-width="1"/>
<line x1="918.5" y1="193.5" x2="918.5" y2="185.8" stroke="#f4f4f4" stroke-width="1"/>
<line x1="926.5" y1="193.5" x2="926.5" y2="186.5" stroke="#f4f4f4" stroke-width="1"/>
<line x1="934.5" y1="193.5" x2="934.5" y2="192.0" stroke="#f4f4f4" stroke-width="1"/>
<line x1="942.5" y1="193.5" x2="942.5" y2="192.9" stroke="#f4f4f4" stroke-width="1"/>
<line x1="950.5" y1="193.5" x2="950.5" y2="196.2" stroke="#f4f4f4" stroke-width="1"/>
<line x1="958.5" y1="193.5" x2="958.5" y2="199.3" stroke="#f4f4f4" stroke-width="1"/>
<line x1="966.5" y1="193.5" x2="966.5" y2="201.0" stroke="#f4f4f4" stroke-width="1"/>
<line x1="974.5" y1="193.5" x2="974.5" y2="202.5" stroke="#f4f4f4" stroke-width="1"/>
<line x1="982.5" y1="193.5" x2="982.5" y2="204.0" stroke="#f4f4f4" stroke-width="1"/>
<line x1="990.5" y1="193.5" x2="990.5" y2="205.6" stroke="#f4f4f4" stroke-width="1"/>
<line x1="998.5" y1="193.5" x2="998.5" y2="206.8" stroke="#f4f4f4" stroke-width="1"/>
<line x1="1006.5" y1="193.5" x2="1006.5" y2="206.8" stroke="#f4f4f4" stroke-width="1"/>
<line x1="1014.5" y1="193.5" x2="1014.5" y2="205.6" stroke="#f4f4f4" stroke-width="1"/>
<line x1="1022.5" y1="193.5" x2="1022.5" y2="205.6" stroke="#f4f4f4" stroke-width="1"/>
<line x1="1030.5" y1="193.5" x2="1030.5" y2="207.9" stroke="#f4f4f4" stroke-width="1"/>
<line x1="1038.5" y1="193.5" x2="1038.5" y2="205.6" stroke="#f4f4f4" stroke-width="1"/>
<line x1="1046.5" y1="193.5" x2="1046.5" y2="205.6" stroke="#f4f4f4" stroke-width="1"/>
<line x1="1054.5" y1="193.5" x2="1054.5" y2="205.6" stroke="#f4f4f4" stroke-width="1"/>
<line x1="1062.5" y1="193.5" x2="1062.5" y2="204.9" stroke="#f4f4f4" stroke-width="1"/>
<line x1="1070.5" y1="193.5" x2="1070.5" y2="205.6" stroke="#f4f4f4" stroke-width="1"/>
<line x1="1078.5" y1="193.5" x2="1078.5" y2="206.8" stroke="#f4f4f4" stroke-width="1"/>
<line x1="1086.5" y1="193.5" x2="1086.5" y2="207.9" stroke="#f4f4f4" stroke-width="1"/>
<line x1="1094.5" y1="193.5" x2="1094.5" y2="210.3" stroke="#f4f4f4" stroke-width="1"/>
<line x1="1102.5" y1="193.5" x2="1102.5" y2="211.4" stroke="#f4f4f4" stroke-width="1"/>
<line x1="1110.5" y1="193.5" x2="1110.5" y2="211.9" stroke="#f4f4f4" stroke-width="1"/>
<line x1="1118.5" y1="193.5" x2="1118.5" y2="211.4" stroke="#f4f4f4" stroke-width="1"/>
<line x1="1126.5" y1="193.5" x2="1126.5" y2="210.3" stroke="#f4f4f4" stroke-width="1"/>
<line x1="1134.5" y1="193.5" x2="1134.5" y2="210.3" stroke="#f4f4f4" stroke-width="1"/>
<line x1="1142.5" y1="193.5" x2="1142.5" y2="211.4" stroke="#f4f4f4" stroke-width="1"/>
<line x1="1150.5" y1="193.5" x2="1150.5" y2="211.0" stroke="#f4f4f4" stroke-width="1"/>
<line x1="1158.5" y1="193.5" x2="1158.5" y2="209.1" stroke="#f4f4f4" stroke-width="1"/>
<line x1="1166.5" y1="193.5" x2="1166.5" y2="206.8" stroke="#f4f4f4" stroke-width="1"/>
<line x1="1174.5" y1="193.5" x2="1174.5" y2="205.6" stroke="#f4f4f4" stroke-width="1"/>
<line x1="1182.5" y1="193.5" x2="1182.5" y2="202.1" stroke="#f4f4f4" stroke-width="1"/>
<line x1="1190.5" y1="193.5" x2="1190.5" y2="197.9" stroke="#f4f4f4" stroke-width="1"/>
<line x1="1198.5" y1="193.5" x2="1198.5" y2="195.1" stroke="#f4f4f4" stroke-width="1"/>
<path d="M215.1,196.9 L222.4,194.2 L232.7,191.1 L253.5,187.0 L274.2,184.9 L294.9,183.2 L311.5,180.7 L328.1,178.2 L344.7,174.9 L361.3,172.9 L377.9,172.0 L394.5,172.0 L411.0,173.5 L427.6,175.6 L444.2,177.6 L460.8,179.7 L482.7,182.8 L503.5,185.9 L524.2,189.0 L544.9,193.2 L561.5,196.9 L578.1,199.0 L594.7,199.8 L611.3,201.5 L627.9,203.5 L644.5,206.0 L661.0,207.7 L677.6,208.7 L710.8,208.7 L732.7,207.7 L753.5,207.3 L774.2,206.0 L790.8,203.5 L805.3,199.8 L819.8,195.2 L836.4,191.1 L853.0,187.0 L869.6,184.9 L888.2,184.5 L909.0,184.5 L929.7,185.3 L946.3,187.4 L960.8,190.7 L973.6,194.9 L985.3,198.4 L996.9,201.4 L1008.6,203.8 L1031.9,206.1 L1055.1,206.6 L1078.4,206.6 L1092.4,207.7 L1111.0,209.4 L1129.7,210.1 L1148.3,210.8 L1162.3,210.1 L1176.2,208.9 L1185.5,207.3 L1197.2,206.1" fill="none" stroke="#c81a1a" stroke-width="1" stroke-dasharray="2,2"/>
<line x1="216" y1="231.5" x2="1215" y2="231.5" stroke="#e0e0e0" stroke-width="1" stroke-dasharray="3,3"/>
<line x1="216" y1="240.5" x2="1215" y2="240.5" stroke="#e0e0e0" stroke-width="1" stroke-dasharray="3,3"/>
<line x1="216" y1="249.5" x2="1215" y2="249.5" stroke="#e0e0e0" stroke-width="1" stroke-dasharray="3,3"/>
<path d="M215.1,236.7 L228.6,235.1 L239.0,238.8 L247.2,239.2 L255.5,236.7 L274.2,237.3 L286.6,236.3 L294.9,231.5 L315.7,232.2 L328.1,231.5 L340.6,229.5 L357.1,230.5 L365.4,233.6 L373.7,235.7 L382.0,233.6 L391.3,239.8 L409.0,238.4 L429.7,237.8 L438.0,235.7 L448.4,238.8 L460.8,239.2 L472.4,237.8 L479.6,236.3 L486.9,239.8 L497.2,244.0 L520.1,244.0 L526.3,242.9 L533.5,246.0 L542.9,246.0 L553.2,242.9 L565.7,240.9 L578.1,241.3 L590.6,240.4 L600.9,249.2 L611.3,248.7 L619.6,248.1 L640.3,248.7 L659.0,244.0 L669.3,242.9 L677.6,241.3 L683.9,242.5 L694.2,247.5 L702.5,247.5 L710.8,245.4 L728.6,245.0 L734.8,244.0 L742.1,245.4 L756.6,240.9 L780.4,239.8 L788.7,233.6 L794.9,231.9 L824.0,231.5 L830.2,233.0 L844.7,239.8 L853.0,238.4 L861.3,237.8 L870.6,240.4 L877.9,236.7 L888.2,237.1 L898.6,236.7 L906.9,238.4 L925.6,238.8 L935.9,246.7 L944.2,247.5 L952.5,246.7 L958.7,247.5 L962.0,245.7 L973.6,245.7 L983.0,247.3 L989.9,249.0 L999.3,246.6 L1006.2,244.3 L1017.9,244.3 L1024.9,246.2 L1030.7,249.0 L1036.5,244.3 L1043.5,242.0 L1050.5,242.0 L1062.1,243.4 L1071.4,245.0 L1083.1,247.3 L1094.7,249.2 L1104.0,249.0 L1111.0,246.6 L1120.3,246.2 L1127.3,244.3 L1134.3,245.0 L1152.9,245.0 L1164.6,241.0 L1173.9,241.5 L1183.2,238.0 L1190.2,235.0 L1198.1,236.4" fill="none" stroke="#5585d8" stroke-width="1"/>
<line x1="216" y1="274.5" x2="1215" y2="274.5" stroke="#e0e0e0" stroke-width="1" stroke-dasharray="3,3"/>
<line x1="216" y1="299.5" x2="1215" y2="299.5" stroke="#e0e0e0" stroke-width="1" stroke-dasharray="3,3"/>
<path d="M216.0,273.6 L220.0,273.6 L224.0,273.6 L228.0,273.7 L232.0,273.8 L236.0,273.9 L240.0,274.7 L244.0,276.0 L248.0,278.4 L252.0,282.0 L256.0,285.3 L260.0,288.5 L264.0,290.1 L268.0,290.1 L272.0,289.5 L276.0,287.9 L280.0,286.7 L284.0,285.8 L288.0,284.8 L292.0,283.8 L296.0,282.3 L300.0,280.1 L304.0,277.9 L308.0,275.7 L312.0,274.2 L316.0,273.3 L320.0,272.8 L324.0,272.7 L328.0,272.6 L332.0,272.6 L336.0,272.7 L340.0,272.8 L344.0,273.0 L348.0,273.4 L352.0,273.9 L356.0,274.5 L360.0,275.3 L364.0,276.2 L368.0,278.0 L372.0,280.5 L376.0,283.6 L380.0,287.4 L384.0,290.1 L388.0,292.2 L392.0,293.6 L396.0,293.6 L400.0,293.1 L404.0,292.3 L408.0,291.8 L412.0,291.4 L416.0,291.0 L420.0,290.7 L424.0,289.9 L428.0,288.7 L432.0,287.2 L436.0,285.5 L440.0,283.4 L444.0,280.9 L448.0,279.4 L452.0,278.5 L456.0,278.5 L460.0,280.4 L464.0,282.8 L468.0,285.2 L472.0,287.1 L476.0,287.9 L480.0,287.7 L484.0,286.4 L488.0,285.6 L492.0,285.0 L496.0,285.6 L500.0,287.5 L504.0,289.9 L508.0,292.8 L512.0,295.2 L516.0,297.2 L520.0,298.3 L524.0,298.8 L528.0,298.9 L532.0,298.9 L536.0,298.7 L540.0,298.4 L544.0,297.6 L548.0,296.1 L552.0,293.7 L556.0,290.3 L560.0,286.5 L564.0,282.3 L568.0,278.6 L572.0,275.4 L576.0,273.2 L580.0,271.7 L584.0,271.0 L588.0,270.7 L592.0,270.8 L596.0,271.4 L600.0,273.8 L604.0,277.0 L608.0,281.2 L612.0,285.9 L616.0,289.9 L620.0,293.0 L624.0,295.5 L628.0,297.2 L632.0,298.6 L636.0,299.6 L640.0,300.0 L644.0,299.5 L648.0,298.2 L652.0,295.5 L656.0,291.5 L660.0,286.2 L664.0,281.1 L668.0,276.2 L672.0,272.6 L676.0,270.7 L680.0,269.7 L684.0,269.9 L688.0,271.6 L692.0,274.7 L696.0,278.5 L700.0,283.4 L704.0,288.1 L708.0,292.2 L712.0,295.3 L716.0,296.8 L720.0,297.4 L724.0,296.7 L728.0,295.7 L732.0,294.4 L736.0,292.9 L740.0,291.2 L744.0,289.7 L748.0,288.3 L752.0,287.0 L756.0,285.8 L760.0,284.5 L764.0,282.5 L768.0,279.7 L772.0,276.8 L776.0,273.9 L780.0,272.3 L784.0,271.5 L788.0,271.5 L792.0,271.5 L796.0,271.5 L800.0,271.4 L804.0,271.1 L808.0,270.5 L812.0,270.1 L816.0,269.7 L820.0,269.4 L824.0,269.4 L828.0,269.9 L832.0,270.6 L836.0,272.0 L840.0,274.5 L844.0,278.3 L848.0,283.1 L852.0,288.5 L856.0,293.4 L860.0,297.1 L864.0,299.0 L868.0,299.3 L872.0,299.0 L876.0,297.6 L880.0,296.2 L884.0,294.5 L888.0,292.4 L892.0,289.7 L896.0,286.4 L900.0,283.0 L904.0,280.4 L908.0,279.0 L912.0,278.7 L916.0,279.6 L920.0,280.7 L924.0,282.0 L928.0,284.0 L932.0,286.8 L936.0,289.9 L940.0,293.5 L944.0,296.4 L948.0,298.7 L952.0,300.4 L956.0,300.9 L960.0,301.1 L964.0,301.1 L968.0,300.8 L972.0,300.4 L976.0,299.6 L980.0,298.5 L984.0,297.3 L988.0,295.8 L992.0,294.0 L996.0,292.2 L1000.0,291.0 L1004.0,289.6 L1008.0,288.1 L1012.0,286.1 L1016.0,283.8 L1020.0,281.0 L1024.0,278.4 L1028.0,277.3 L1032.0,277.1 L1036.0,278.1 L1040.0,279.8 L1044.0,281.5 L1048.0,282.6 L1052.0,282.6 L1056.0,281.7 L1060.0,280.0 L1064.0,278.7 L1068.0,278.0 L1072.0,278.4 L1076.0,280.8 L1080.0,283.9 L1084.0,287.5 L1088.0,291.2 L1092.0,294.8 L1096.0,298.2 L1100.0,300.9 L1104.0,302.6 L1108.0,303.4 L1112.0,303.3 L1116.0,302.3 L1120.0,300.6 L1124.0,298.2 L1128.0,295.0 L1132.0,291.3 L1136.0,287.8 L1140.0,284.8 L1144.0,283.1 L1148.0,282.4 L1152.0,283.3 L1156.0,284.7 L1160.0,285.8 L1164.0,286.0 L1168.0,285.1 L1172.0,282.7 L1176.0,280.0 L1180.0,277.6 L1184.0,275.7 L1188.0,274.6 L1192.0,273.7 L1196.0,273.0" fill="none" stroke="#e02020" stroke-width="1" stroke-dasharray="3,2"/>
<path d="M215.1,273.6 L232.7,274.2 L239.0,277.7 L247.2,288.1 L255.5,292.2 L263.8,288.7 L272.1,285.4 L278.3,285.4 L286.6,282.9 L294.9,276.7 L303.2,272.9 L319.8,272.5 L336.4,272.9 L346.8,274.6 L359.2,277.1 L367.5,285.0 L375.8,293.2 L384.1,293.7 L390.3,294.3 L398.6,290.1 L406.9,292.2 L415.2,289.5 L423.5,287.0 L431.8,282.9 L440.1,276.7 L446.3,277.7 L454.6,282.9 L462.0,288.7 L470.3,288.7 L480.7,283.3 L489.0,286.0 L497.2,292.2 L505.5,298.4 L515.9,299.1 L534.6,298.4 L542.9,294.3 L553.2,282.9 L561.5,274.6 L569.8,270.9 L586.4,270.4 L592.6,273.6 L598.8,282.9 L607.1,292.2 L617.5,297.4 L629.9,301.1 L638.2,299.1 L646.5,293.2 L654.8,277.7 L663.1,270.9 L671.4,268.4 L679.7,270.9 L688.0,280.8 L696.3,291.2 L702.5,297.8 L710.8,297.8 L720.3,295.3 L734.8,289.1 L749.3,285.0 L757.6,281.8 L765.9,271.5 L794.9,271.5 L803.2,269.4 L819.8,269.4 L830.2,272.9 L838.5,282.9 L846.8,296.4 L855.1,301.5 L861.3,298.4 L869.6,297.4 L877.9,292.2 L886.2,288.1 L894.5,276.7 L902.8,279.1 L911.0,280.4 L919.3,283.9 L927.6,291.2 L935.9,299.1 L942.1,301.1 L960.8,301.1 L973.6,297.6 L983.0,294.1 L991.1,289.0 L998.1,290.1 L1008.6,281.3 L1021.4,274.3 L1030.7,281.3 L1038.8,283.1 L1047.0,283.1 L1055.1,276.2 L1062.1,277.1 L1071.4,284.8 L1083.1,296.4 L1094.7,304.6 L1104.0,303.4 L1113.4,299.9 L1122.7,290.6 L1129.7,283.6 L1136.6,281.3 L1143.6,282.4 L1150.6,288.3 L1157.6,286.4 L1166.9,279.0 L1173.9,274.8 L1183.2,273.8 L1190.2,272.0 L1197.2,271.3" fill="none" stroke="#46b0a0" stroke-width="1"/>
<text x="219" y="88" fill="#fff" stroke="#fff" stroke-width="0.25" >GOLD,H4&#160; 1108.75 1109.10 1106.35 1107.28</text>
<text x="219" y="180" fill="#fff" stroke="#fff" stroke-width="0.25" >MACD(12,26,9) -0.609 -3.857</text>
<text x="219" y="231" fill="#fff" stroke="#fff" stroke-width="0.25" >RSI(14) 59.9993</text>
<text x="219" y="277" fill="#fff" stroke="#fff" stroke-width="0.25" >Stoch(5,3,3) 86.8074 83.2823</text>
<line x1="1216" y1="97.5" x2="1219" y2="97.5" stroke="#fff"/>
<text x="1221.5" y="100.5" fill="#fff" stroke="#fff" stroke-width="0.25" textLength="32" lengthAdjust="spacingAndGlyphs">1132.10</text>
<line x1="1216" y1="161.5" x2="1219" y2="161.5" stroke="#fff"/>
<text x="1221.5" y="164.5" fill="#fff" stroke="#fff" stroke-width="0.25" textLength="32" lengthAdjust="spacingAndGlyphs">1084.50</text>
<rect x="1218" y="125" width="36" height="11" fill="#fff"/>
<line x1="1215" y1="131.5" x2="1218" y2="131.5" stroke="#fff"/>
<text x="1221.5" y="133.8" fill="#000" stroke="#000" stroke-width="0.25" textLength="32" lengthAdjust="spacingAndGlyphs">1107.28</text>
<text x="1219.5" y="177.4" fill="#fff" stroke="#fff" stroke-width="0.25" >8.629</text>
<line x1="1216" y1="193.5" x2="1218" y2="193.5" stroke="#fff"/>
<text x="1219.5" y="195.9" fill="#fff" stroke="#fff" stroke-width="0.25" >0.00</text>
<text x="1219.5" y="211.9" fill="#fff" stroke="#fff" stroke-width="0.25" >-6.997</text>
<text x="1219.5" y="227.6" fill="#fff" stroke="#fff" stroke-width="0.25" >100</text>
<text x="1219.5" y="233.9" fill="#fff" stroke="#fff" stroke-width="0.25" >70</text>
<text x="1219.5" y="242.9" fill="#fff" stroke="#fff" stroke-width="0.25" >50</text>
<text x="1219.5" y="251.4" fill="#fff" stroke="#fff" stroke-width="0.25" >30</text>
<text x="1219.5" y="258.4" fill="#fff" stroke="#fff" stroke-width="0.25" >0</text>
<text x="1219.5" y="274.59999999999997" fill="#fff" stroke="#fff" stroke-width="0.25" >100</text>
<text x="1219.5" y="276.9" fill="#fff" stroke="#fff" stroke-width="0.25" >80</text>
<text x="1219.5" y="301.79999999999995" fill="#fff" stroke="#fff" stroke-width="0.25" >20</text>
<text x="1219.5" y="305.2" fill="#fff" stroke="#fff" stroke-width="0.25" >0</text>
<line x1="215.5" y1="308" x2="215.5" y2="311.5" stroke="#fff"/>
<text x="214.0" y="320.6" fill="#fff" stroke="#fff" stroke-width="0.25" >28 Feb 2010</text>
<line x1="279.5" y1="308" x2="279.5" y2="311.5" stroke="#fff"/>
<text x="278.0" y="320.6" fill="#fff" stroke="#fff" stroke-width="0.25" >2 Mar 04:00</text>
<line x1="343.5" y1="308" x2="343.5" y2="311.5" stroke="#fff"/>
<text x="342.0" y="320.6" fill="#fff" stroke="#fff" stroke-width="0.25" >3 Mar 12:00</text>
<line x1="407.5" y1="308" x2="407.5" y2="311.5" stroke="#fff"/>
<text x="406.0" y="320.6" fill="#fff" stroke="#fff" stroke-width="0.25" >4 Mar 20:00</text>
<line x1="471.5" y1="308" x2="471.5" y2="311.5" stroke="#fff"/>
<text x="470.0" y="320.6" fill="#fff" stroke="#fff" stroke-width="0.25" >8 Mar 00:00</text>
<line x1="535.5" y1="308" x2="535.5" y2="311.5" stroke="#fff"/>
<text x="534.0" y="320.6" fill="#fff" stroke="#fff" stroke-width="0.25" >9 Mar 08:00</text>
<line x1="599.5" y1="308" x2="599.5" y2="311.5" stroke="#fff"/>
<text x="598.0" y="320.6" fill="#fff" stroke="#fff" stroke-width="0.25" >10 Mar 16:00</text>
<line x1="663.5" y1="308" x2="663.5" y2="311.5" stroke="#fff"/>
<text x="662.0" y="320.6" fill="#fff" stroke="#fff" stroke-width="0.25" >12 Mar 00:00</text>
<line x1="726.5" y1="308" x2="726.5" y2="311.5" stroke="#fff"/>
<text x="725.0" y="320.6" fill="#fff" stroke="#fff" stroke-width="0.25" >15 Mar 04:00</text>
<line x1="790.5" y1="308" x2="790.5" y2="311.5" stroke="#fff"/>
<text x="789.0" y="320.6" fill="#fff" stroke="#fff" stroke-width="0.25" >16 Mar 12:00</text>
<line x1="854.5" y1="308" x2="854.5" y2="311.5" stroke="#fff"/>
<text x="853.0" y="320.6" fill="#fff" stroke="#fff" stroke-width="0.25" >17 Mar 20:00</text>
<line x1="918.5" y1="308" x2="918.5" y2="311.5" stroke="#fff"/>
<text x="917.0" y="320.6" fill="#fff" stroke="#fff" stroke-width="0.25" >19 Mar 04:00</text>
<line x1="982.5" y1="308" x2="982.5" y2="311.5" stroke="#fff"/>
<text x="981.0" y="320.6" fill="#fff" stroke="#fff" stroke-width="0.25" >22 Mar 08:00</text>
<line x1="1046.5" y1="308" x2="1046.5" y2="311.5" stroke="#fff"/>
<text x="1045.0" y="320.6" fill="#fff" stroke="#fff" stroke-width="0.25" >23 Mar 16:00</text>
<line x1="1110.5" y1="308" x2="1110.5" y2="311.5" stroke="#fff"/>
<text x="1109.0" y="320.6" fill="#fff" stroke="#fff" stroke-width="0.25" >25 Mar 00:00</text>
<line x1="1174.5" y1="308" x2="1174.5" y2="311.5" stroke="#fff"/>
<text x="1173.0" y="320.6" fill="#fff" stroke="#fff" stroke-width="0.25" >26 Mar 08:00</text>
</svg>
</div>
<div class="ctabs">
  <div class="cline"></div>
  <div class="ctab" style="left:225px">GBPUSD,H4</div>
  <div class="ctab act" style="left:294px;width:66px">GOLD,H4</div>
  <div class="ctab" style="left:372px">EURUSD,H1</div><div class="csep" style="left:442px"></div>
  <div class="ctab" style="left:452px">USDJPY,H4</div><div class="csep" style="left:518px"></div>
  <div class="ctab" style="left:528px">GBPJPY,H4</div><div class="csep" style="left:594px"></div>
  <div class="carr" style="left:1228px">&#9664;</div><div class="carr" style="left:1243px">&#9654;</div>
</div>
<div class="term">
<div class="thead">
<div class="th first" style="left:0px;width:104px"><span>定单</span></div>
<div class="th" style="left:104px;width:189px"><span>时间</span></div>
<div class="th" style="left:293px;width:87px"><span>类型</span></div>
<div class="th" style="left:380px;width:69px"><span>手数</span></div>
<div class="th" style="left:449px;width:85px"><span>商品</span></div>
<div class="th" style="left:534px;width:86px"><span>价位</span></div>
<div class="th" style="left:620px;width:84px"><span>止损</span></div>
<div class="th" style="left:704px;width:87px"><span>获利</span></div>
<div class="th" style="left:791px;width:189px"><span>时间</span></div>
<div class="th" style="left:980px;width:86px"><span>价位</span></div>
<div class="th" style="left:1066px;width:86px"><span>利息</span></div>
<div class="th" style="left:1152px;width:102px"><span>获利</span></div>
<span class="sortmark">/</span>
</div>
<div class="tr" style="top:21px;background:#fff">
<svg class="ic" style="left:-5px;top:3px" width="16" height="15" viewBox="0 0 16 15" ><rect x="0.500" y="0.500" width="13" height="13" fill="#f2fbf0" stroke="#777"/><path d="M7,2.500 l4,4.500 h-2.300 v4 h-3.400 v-4 h-2.300 z" fill="#35b435" stroke="#157015" stroke-width=".8"/><path d="M7,5.500 v4" stroke="#eaffea" stroke-width="1"/></svg>
<div class="td c0" style="left:0px;width:104px"><span>1083215716</span></div>
<div class="td" style="left:104px;width:189px"><span>2010.03.11 00:41</span></div>
<div class="td cn" style="left:293px;width:87px"><span>出入金</span></div>
<div class="td" style="left:380px;width:69px"><span></span></div>
<div class="td" style="left:449px;width:85px"><span></span></div>
<div class="td" style="left:534px;width:86px"><span></span></div>
<div class="td" style="left:620px;width:84px"><span></span></div>
<div class="td" style="left:704px;width:87px"><span></span></div>
<div class="td" style="left:791px;width:189px"><span></span></div>
<div class="td" style="left:980px;width:86px"><span></span></div>
<div class="td" style="left:1066px;width:86px"><span>Deposit</span></div>
<div class="td last" style="left:1152px;width:102px"><span>14 975.00</span></div>
</div>
<div class="tr" style="top:41px;background:#e8e8e8">
<svg class="ic" style="left:-5px;top:2px" width="18" height="18" viewBox="0 0 18 18" ><path d="M0.500,1.500 h9 l3.500,3.500 v9.500 h-12.500 z" fill="#fff" stroke="#8a8a8a"/><path d="M9.500,1.500 v3.500 h3.500" fill="none" stroke="#8a8a8a"/><circle cx="12.500" cy="13.500" r="3.300" fill="#3a8fd8" stroke="#1a5fa8" stroke-width=".9"/></svg>
<div class="td c0" style="left:0px;width:104px"><span>1083215944</span></div>
<div class="td" style="left:104px;width:189px"><span>2010.03.15 03:17</span></div>
<div class="td cn" style="left:293px;width:87px"><span>买</span></div>
<div class="td" style="left:380px;width:69px"><span>0.50</span></div>
<div class="td" style="left:449px;width:85px"><span>gold</span></div>
<div class="td" style="left:534px;width:86px"><span>1104.65</span></div>
<div class="td" style="left:620px;width:84px"><span>0.00</span></div>
<div class="td" style="left:704px;width:87px"><span>0.00</span></div>
<div class="td" style="left:791px;width:189px"><span>2010.03.17 01:46</span></div>
<div class="td" style="left:980px;width:86px"><span>1126.95</span></div>
<div class="td" style="left:1066px;width:86px"><span>-6.50</span></div>
<div class="td last" style="left:1152px;width:102px"><span>1 115.00</span></div>
</div>
<div class="tr" style="top:61px;background:#fff">
<svg class="ic" style="left:-5px;top:2px" width="18" height="18" viewBox="0 0 18 18" ><path d="M0.500,1.500 h9 l3.500,3.500 v9.500 h-12.500 z" fill="#fff" stroke="#8a8a8a"/><path d="M9.500,1.500 v3.500 h3.500" fill="none" stroke="#8a8a8a"/><circle cx="12.500" cy="13.500" r="3.300" fill="#3a8fd8" stroke="#1a5fa8" stroke-width=".9"/></svg>
<div class="td c0" style="left:0px;width:104px"><span>1083216084</span></div>
<div class="td" style="left:104px;width:189px"><span>2010.03.17 01:59</span></div>
<div class="td cn" style="left:293px;width:87px"><span>买</span></div>
<div class="td" style="left:380px;width:69px"><span>0.50</span></div>
<div class="td" style="left:449px;width:85px"><span>gbpusd</span></div>
<div class="td" style="left:534px;width:86px"><span>1.5226</span></div>
<div class="td" style="left:620px;width:84px"><span>0.0000</span></div>
<div class="td" style="left:704px;width:87px"><span>0.0000</span></div>
<div class="td" style="left:791px;width:189px"><span>2010.03.18 02:42</span></div>
<div class="td" style="left:980px;width:86px"><span>1.5307</span></div>
<div class="td" style="left:1066px;width:86px"><span>-6.75</span></div>
<div class="td last" style="left:1152px;width:102px"><span>405.00</span></div>
</div>
<div class="tr" style="top:81px;background:#e8e8e8">
<svg class="ic" style="left:-5px;top:2px" width="18" height="18" viewBox="0 0 18 18" ><path d="M0.500,1.500 h9 l3.500,3.500 v9.500 h-12.500 z" fill="#fff" stroke="#8a8a8a"/><path d="M9.500,1.500 v3.500 h3.500" fill="none" stroke="#8a8a8a"/><circle cx="12.500" cy="13.500" r="3.300" fill="#d84a2a" stroke="#8a2a10" stroke-width=".9"/></svg>
<div class="td c0" style="left:0px;width:104px"><span>1083216200</span></div>
<div class="td" style="left:104px;width:189px"><span>2010.03.18 02:40</span></div>
<div class="td cn" style="left:293px;width:87px"><span>卖</span></div>
<div class="td" style="left:380px;width:69px"><span>0.50</span></div>
<div class="td" style="left:449px;width:85px"><span>gold</span></div>
<div class="td" style="left:534px;width:86px"><span>1122.70</span></div>
<div class="td" style="left:620px;width:84px"><span>0.00</span></div>
<div class="td" style="left:704px;width:87px"><span>0.00</span></div>
<div class="td" style="left:791px;width:189px"><span>2010.03.19 15:50</span></div>
<div class="td" style="left:980px;width:86px"><span>1108.13</span></div>
<div class="td" style="left:1066px;width:86px"><span>1.25</span></div>
<div class="td last" style="left:1152px;width:102px"><span>728.50</span></div>
</div>
<div class="tr" style="top:101px;background:#fff">
<svg class="ic" style="left:-5px;top:2px" width="18" height="18" viewBox="0 0 18 18" ><path d="M0.500,1.500 h9 l3.500,3.500 v9.500 h-12.500 z" fill="#fff" stroke="#8a8a8a"/><path d="M9.500,1.500 v3.500 h3.500" fill="none" stroke="#8a8a8a"/><circle cx="12.500" cy="13.500" r="3.300" fill="#3a8fd8" stroke="#1a5fa8" stroke-width=".9"/></svg>
<div class="td c0" style="left:0px;width:104px"><span>1083216462</span></div>
<div class="td" style="left:104px;width:189px"><span>2010.03.22 07:47</span></div>
<div class="td cn" style="left:293px;width:87px"><span>买</span></div>
<div class="td" style="left:380px;width:69px"><span>0.50</span></div>
<div class="td" style="left:449px;width:85px"><span>gold</span></div>
<div class="td" style="left:534px;width:86px"><span>1107.03</span></div>
<div class="td" style="left:620px;width:84px"><span>0.00</span></div>
<div class="td" style="left:704px;width:87px"><span>0.00</span></div>
<div class="td" style="left:791px;width:189px"><span>2010.03.22 16:15</span></div>
<div class="td" style="left:980px;width:86px"><span>1099.50</span></div>
<div class="td" style="left:1066px;width:86px"><span>0.00</span></div>
<div class="td last" style="left:1152px;width:102px"><span>-376.50</span></div>
</div>
<div class="tr" style="top:121px;background:#e8e8e8">
<svg class="ic" style="left:-5px;top:2px" width="18" height="18" viewBox="0 0 18 18" ><path d="M0.500,1.500 h9 l3.500,3.500 v9.500 h-12.500 z" fill="#fff" stroke="#8a8a8a"/><path d="M9.500,1.500 v3.500 h3.500" fill="none" stroke="#8a8a8a"/><circle cx="12.500" cy="13.500" r="3.300" fill="#d84a2a" stroke="#8a2a10" stroke-width=".9"/></svg>
<div class="td c0" style="left:0px;width:104px"><span>1083216463</span></div>
<div class="td" style="left:104px;width:189px"><span>2010.03.22 07:47</span></div>
<div class="td cn" style="left:293px;width:87px"><span>卖</span></div>
<div class="td" style="left:380px;width:69px"><span>0.50</span></div>
<div class="td" style="left:449px;width:85px"><span>gold</span></div>
<div class="td" style="left:534px;width:86px"><span>1106.53</span></div>
<div class="td" style="left:620px;width:84px"><span>0.00</span></div>
<div class="td" style="left:704px;width:87px"><span>0.00</span></div>
<div class="td" style="left:791px;width:189px"><span>2010.03.22 16:15</span></div>
<div class="td" style="left:980px;width:86px"><span>1099.90</span></div>
<div class="td" style="left:1066px;width:86px"><span>0.00</span></div>
<div class="td last" style="left:1152px;width:102px"><span>331.50</span></div>
</div>
<div class="tr" style="top:141px;background:#fff">
<svg class="ic" style="left:-5px;top:2px" width="18" height="18" viewBox="0 0 18 18" ><path d="M0.500,1.500 h9 l3.500,3.500 v9.500 h-12.500 z" fill="#fff" stroke="#8a8a8a"/><path d="M9.500,1.500 v3.500 h3.500" fill="none" stroke="#8a8a8a"/><circle cx="12.500" cy="13.500" r="3.300" fill="#3a8fd8" stroke="#1a5fa8" stroke-width=".9"/></svg>
<div class="td c0" style="left:0px;width:104px"><span>1083216503</span></div>
<div class="td" style="left:104px;width:189px"><span>2010.03.22 13:21</span></div>
<div class="td cn" style="left:293px;width:87px"><span>买</span></div>
<div class="td" style="left:380px;width:69px"><span>0.50</span></div>
<div class="td" style="left:449px;width:85px"><span>gold</span></div>
<div class="td" style="left:534px;width:86px"><span>1095.93</span></div>
<div class="td" style="left:620px;width:84px"><span>0.00</span></div>
<div class="td" style="left:704px;width:87px"><span>0.00</span></div>
<div class="td" style="left:791px;width:189px"><span>2010.03.22 16:15</span></div>
<div class="td" style="left:980px;width:86px"><span>1099.75</span></div>
<div class="td" style="left:1066px;width:86px"><span>0.00</span></div>
<div class="td last" style="left:1152px;width:102px"><span>191.00</span></div>
</div>
<div class="tr" style="top:161px;background:#e8e8e8">
<svg class="ic" style="left:-5px;top:2px" width="18" height="18" viewBox="0 0 18 18" ><path d="M0.500,1.500 h9 l3.500,3.500 v9.500 h-12.500 z" fill="#fff" stroke="#8a8a8a"/><path d="M9.500,1.500 v3.500 h3.500" fill="none" stroke="#8a8a8a"/><circle cx="12.500" cy="13.500" r="3.300" fill="#d84a2a" stroke="#8a2a10" stroke-width=".9"/></svg>
<div class="td c0" style="left:0px;width:104px"><span>1083216536</span></div>
<div class="td" style="left:104px;width:189px"><span>2010.03.22 15:54</span></div>
<div class="td cn" style="left:293px;width:87px"><span>卖</span></div>
<div class="td" style="left:380px;width:69px"><span>0.50</span></div>
<div class="td" style="left:449px;width:85px"><span>gold</span></div>
<div class="td" style="left:534px;width:86px"><span>1098.80</span></div>
<div class="td" style="left:620px;width:84px"><span>0.00</span></div>
<div class="td" style="left:704px;width:87px"><span>0.00</span></div>
<div class="td" style="left:791px;width:189px"><span>2010.03.22 16:15</span></div>
<div class="td" style="left:980px;width:86px"><span>1100.10</span></div>
<div class="td" style="left:1066px;width:86px"><span>0.00</span></div>
<div class="td last" style="left:1152px;width:102px"><span>-65.00</span></div>
</div>
<div class="tr" style="top:181px;background:#fff">
<svg class="ic" style="left:-5px;top:2px" width="18" height="18" viewBox="0 0 18 18" ><path d="M0.500,1.500 h9 l3.500,3.500 v9.500 h-12.500 z" fill="#fff" stroke="#8a8a8a"/><path d="M9.500,1.500 v3.500 h3.500" fill="none" stroke="#8a8a8a"/><circle cx="12.500" cy="13.500" r="3.300" fill="#d84a2a" stroke="#8a2a10" stroke-width=".9"/></svg>
<div class="td c0" style="left:0px;width:104px"><span>1083216581</span></div>
<div class="td" style="left:104px;width:189px"><span>2010.03.23 02:07</span></div>
<div class="td cn" style="left:293px;width:87px"><span>卖</span></div>
<div class="td" style="left:380px;width:69px"><span>0.50</span></div>
<div class="td" style="left:449px;width:85px"><span>gold</span></div>
<div class="td" style="left:534px;width:86px"><span>1104.00</span></div>
<div class="td" style="left:620px;width:84px"><span>0.00</span></div>
<div class="td" style="left:704px;width:87px"><span>0.00</span></div>
<div class="td" style="left:791px;width:189px"><span>2010.03.23 11:52</span></div>
<div class="td" style="left:980px;width:86px"><span>1095.45</span></div>
<div class="td" style="left:1066px;width:86px"><span>0.00</span></div>
<div class="td last" style="left:1152px;width:102px"><span>427.50</span></div>
</div>
<div class="tr" style="top:201px;background:#e8e8e8">
<svg class="ic" style="left:-5px;top:2px" width="18" height="18" viewBox="0 0 18 18" ><path d="M0.500,1.500 h9 l3.500,3.500 v9.500 h-12.500 z" fill="#fff" stroke="#8a8a8a"/><path d="M9.500,1.500 v3.500 h3.500" fill="none" stroke="#8a8a8a"/><circle cx="12.500" cy="13.500" r="3.300" fill="#3a8fd8" stroke="#1a5fa8" stroke-width=".9"/></svg>
<div class="td c0" style="left:0px;width:104px"><span>1083217018</span></div>
<div class="td" style="left:104px;width:189px"><span>2010.03.25 09:55</span></div>
<div class="td cn" style="left:293px;width:87px"><span>买</span></div>
<div class="td" style="left:380px;width:69px"><span>0.50</span></div>
<div class="td" style="left:449px;width:85px"><span>gold</span></div>
<div class="td" style="left:534px;width:86px"><span>1093.85</span></div>
<div class="td" style="left:620px;width:84px"><span>0.00</span></div>
<div class="td" style="left:704px;width:87px"><span>0.00</span></div>
<div class="td" style="left:791px;width:189px"><span>2010.03.25 14:25</span></div>
<div class="td" style="left:980px;width:86px"><span>1089.50</span></div>
<div class="td" style="left:1066px;width:86px"><span>0.00</span></div>
<div class="td last" style="left:1152px;width:102px"><span>-217.50</span></div>
</div>
<div class="vline" style="left:104px"></div>
<div class="vline" style="left:293px"></div>
<div class="vline" style="left:380px"></div>
<div class="vline" style="left:449px"></div>
<div class="vline" style="left:534px"></div>
<div class="vline" style="left:620px"></div>
<div class="vline" style="left:704px"></div>
<div class="vline" style="left:791px"></div>
<div class="vline" style="left:980px"></div>
<div class="vline" style="left:1066px"></div>
<div class="vline" style="left:1152px"></div>
<div class="sumrow"><span class="sico"></span><span class="sl" style="left:19px"><span class="cj">盈</span>/<span class="cj">亏</span>: 2 302.50&#160; <span class="cj">信用额</span>: 0.00&#160; <span class="cj">存款</span>: 14 975.00&#160; <span class="cj">取款</span>: 0.00</span><span class="sr">17 277.50</span></div>
</div>
<div class="btabs">
  <div class="bt" style="left:5px">交易</div>
  <div class="bt act" style="left:40px;width:66px">账户历史</div>
  <div class="bt" style="left:117px">警报</div><div class="bsep" style="left:151px"></div>
  <div class="bt" style="left:161px">邮箱</div><div class="bsep" style="left:195px"></div>
  <div class="bt" style="left:206px">日志</div><div class="bsep" style="left:240px"></div>
</div>
</div>
</body></html>
